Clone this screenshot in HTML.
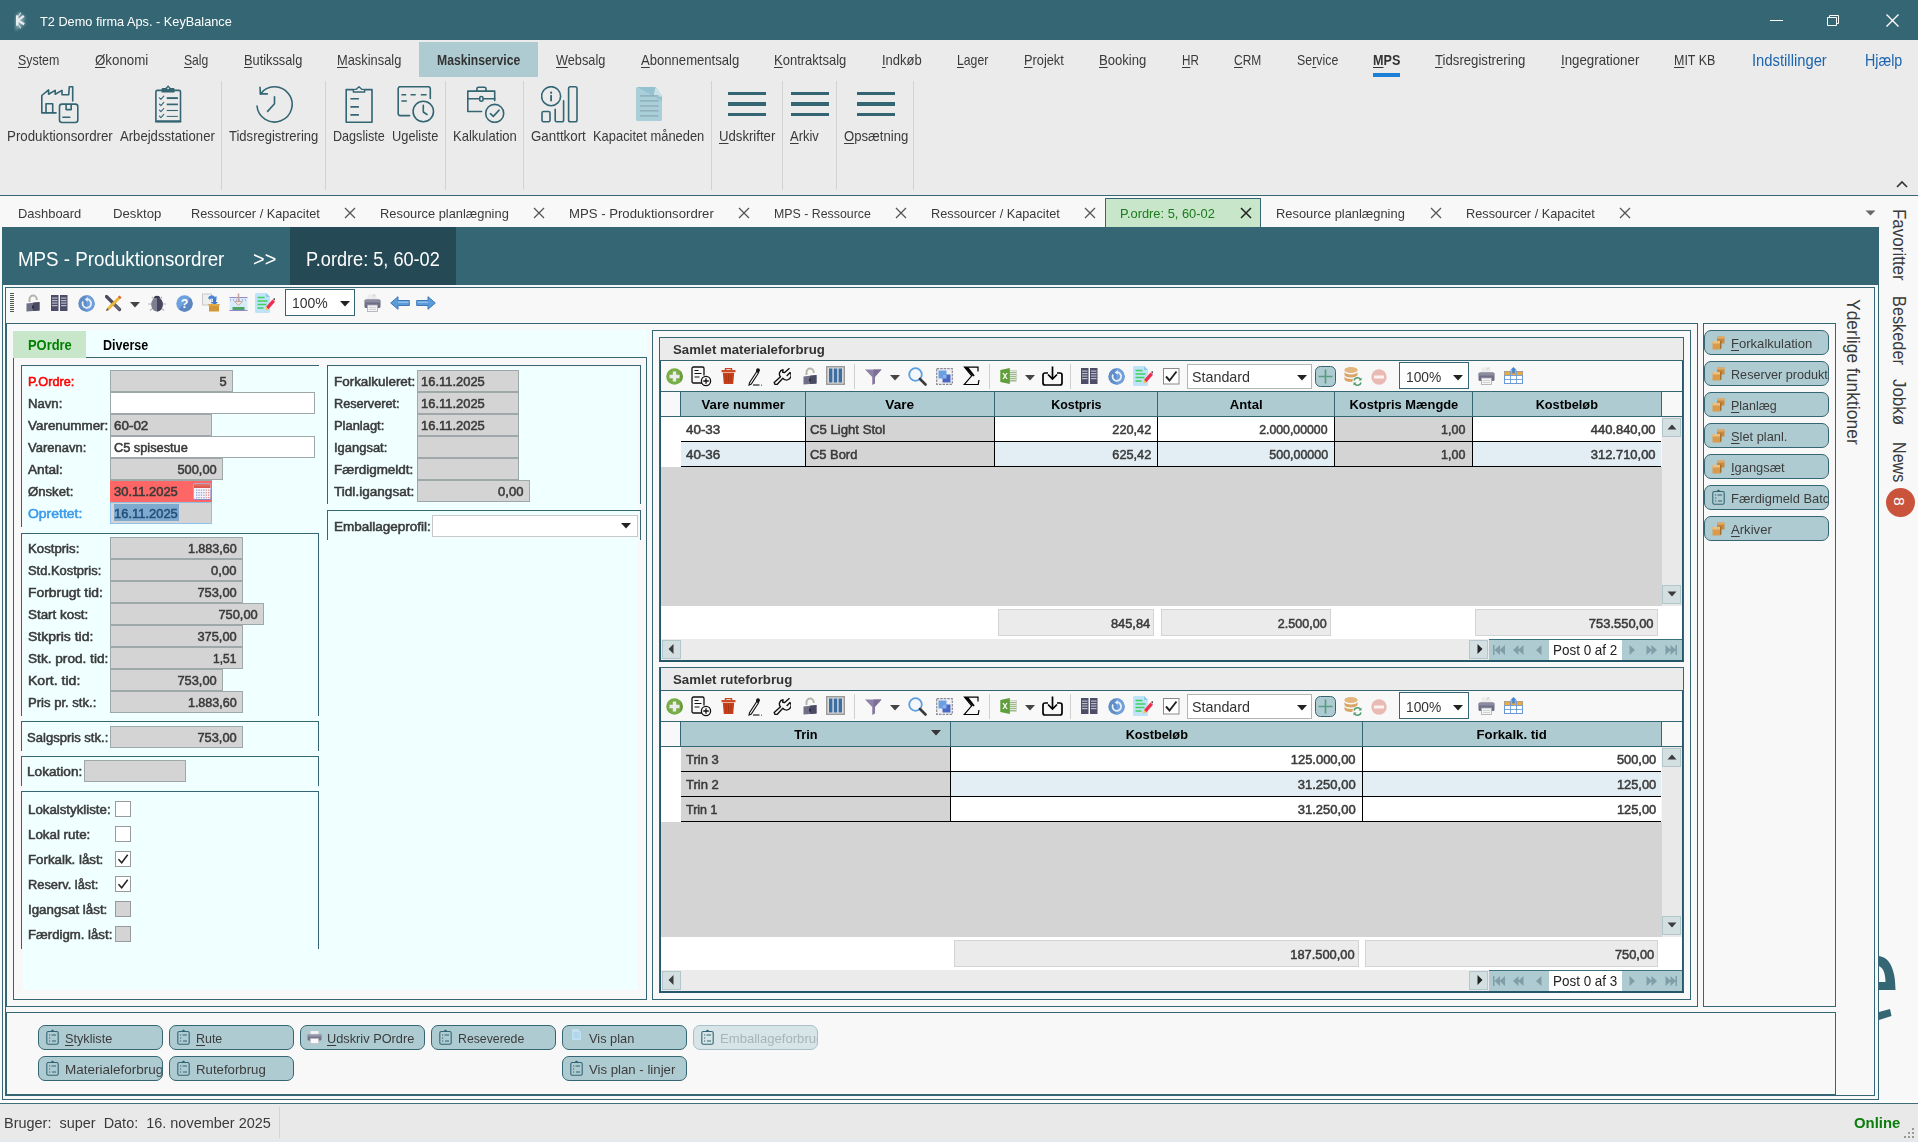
<!DOCTYPE html><html><head><meta charset="utf-8"><title>KeyBalance</title><style>html,body{margin:0;padding:0}
body{width:1918px;height:1142px;position:relative;overflow:hidden;background:#f8f8f8;font-family:"Liberation Sans",sans-serif;}
body>div,body>svg,body>span{position:absolute;box-sizing:content-box}
.t{position:absolute;white-space:pre;line-height:1;transform-origin:0 0}
u{text-decoration-thickness:1px;text-underline-offset:2px}
</style></head><body>
<div style="left:0px;top:0px;width:1918px;height:40px;background:#346674;"></div>
<svg style="left:8px;top:7px" width="24" height="26" viewBox="0 0 24 26"><defs><filter id="gl" x="-50%" y="-50%" width="200%" height="200%"><feGaussianBlur stdDeviation="1.6"/></filter></defs><path d="M9.500 8.500V18.500L16 9M10 13.500L16.500 17.500M12.500 6l-2 3M12.500 21l-2-3" stroke="#cfe0e4" stroke-width="3.500" fill="none" opacity="0.550" filter="url(#gl)"/><path d="M9.300 8.300V18.700" stroke="#e6eef0" stroke-width="2.600" fill="none"/><path d="M10 13.500L15.800 8.800M10 13.500L16.200 17.300" stroke="#e6eef0" stroke-width="2.200" fill="none"/><path d="M12.700 5.800L11 8.500M12.700 21.200L11 18.500" stroke="#d5e2e5" stroke-width="1.200" fill="none"/></svg>
<span class="t" style="font-size:13.3px;color:#fff;left:40.3px;top:14.9px;transform:scaleX(0.9577);">T2 Demo firma Aps. - KeyBalance</span>
<div style="left:1770px;top:20px;width:13px;height:1px;background:#fff;"></div>
<svg style="left:1826px;top:14px" width="14" height="13" viewBox="0 0 14 13"><path d="M1.5 3.5h9v8h-9z M3.5 3.5v-2h9v8h-2" stroke="#fff" fill="none" stroke-width="1"/></svg>
<svg style="left:1885px;top:13px" width="15" height="15" viewBox="0 0 15 15"><path d="M1.5 1.5l12 12M13.5 1.5l-12 12" stroke="#fff" fill="none" stroke-width="1.4"/></svg>
<div style="left:0px;top:40px;width:1918px;height:155px;background:#ebebeb;"></div>
<div style="left:419px;top:42px;width:119px;height:35px;background:#aecbd1;"></div>
<span class="t" style="font-size:14.5px;color:#3a3a3a;left:18.3px;top:52.8px;transform:scaleX(0.8543);"><u>S</u>ystem</span>
<span class="t" style="font-size:14.5px;color:#3a3a3a;left:95.3px;top:52.8px;transform:scaleX(0.9185);"><u>Ø</u>konomi</span>
<span class="t" style="font-size:14.5px;color:#3a3a3a;left:184.3px;top:52.8px;transform:scaleX(0.837);"><u>S</u>alg</span>
<span class="t" style="font-size:14.5px;color:#3a3a3a;left:244.3px;top:52.8px;transform:scaleX(0.8821);"><u>B</u>utikssalg</span>
<span class="t" style="font-size:14.5px;color:#3a3a3a;left:337.3px;top:52.8px;transform:scaleX(0.8863);"><u>M</u>askinsalg</span>
<span class="t" style="font-size:14.5px;color:#3a3a3a;left:556.3px;top:52.8px;transform:scaleX(0.8777);"><u>W</u>ebsalg</span>
<span class="t" style="font-size:14.5px;color:#3a3a3a;left:641.3px;top:52.8px;transform:scaleX(0.9031);"><u>A</u>bonnementsalg</span>
<span class="t" style="font-size:14.5px;color:#3a3a3a;left:774.3px;top:52.8px;transform:scaleX(0.8969);"><u>K</u>ontraktsalg</span>
<span class="t" style="font-size:14.5px;color:#3a3a3a;left:882.3px;top:52.8px;transform:scaleX(0.8975);"><u>I</u>ndkøb</span>
<span class="t" style="font-size:14.5px;color:#3a3a3a;left:957.3px;top:52.8px;transform:scaleX(0.8435);"><u>L</u>ager</span>
<span class="t" style="font-size:14.5px;color:#3a3a3a;left:1023.8px;top:52.8px;transform:scaleX(0.8817);"><u>P</u>rojekt</span>
<span class="t" style="font-size:14.5px;color:#3a3a3a;left:1099.3px;top:52.8px;transform:scaleX(0.9026);"><u>B</u>ooking</span>
<span class="t" style="font-size:14.5px;color:#3a3a3a;left:1181.8px;top:52.8px;transform:scaleX(0.8012);"><u>H</u>R</span>
<span class="t" style="font-size:14.5px;color:#3a3a3a;left:1233.8px;top:52.8px;transform:scaleX(0.8261);"><u>C</u>RM</span>
<span class="t" style="font-size:14.5px;color:#3a3a3a;left:1297.3px;top:52.8px;transform:scaleX(0.8535);">Se<u>r</u>vice</span>
<span class="t" style="font-size:14.5px;color:#3a3a3a;left:1435.3px;top:52.8px;transform:scaleX(0.9084);"><u>T</u>idsregistrering</span>
<span class="t" style="font-size:14.5px;color:#3a3a3a;left:1560.8px;top:52.8px;transform:scaleX(0.9163);"><u>I</u>ngegrationer</span>
<span class="t" style="font-size:14.5px;color:#3a3a3a;left:1673.8px;top:52.8px;transform:scaleX(0.8587);"><u>M</u>IT KB</span>
<span class="t" style="font-size:14.5px;color:#333;font-weight:700;left:437.3px;top:52.8px;transform:scaleX(0.8401);">Maskinservice</span>
<span class="t" style="font-size:14.5px;color:#333;font-weight:700;left:1373.3px;top:52.8px;transform:scaleX(0.8684);"><u>M</u>PS</span>
<div style="left:1373px;top:73px;width:27px;height:4px;background:#1e7fd6;"></div>
<span class="t" style="font-size:16px;color:#1c64ad;left:1752.3px;top:52.55px;transform:scaleX(0.9242);">Indstillinger</span>
<span class="t" style="font-size:16px;color:#1c64ad;left:1864.8px;top:52.55px;transform:scaleX(0.8924);">Hjælp</span>
<div style="left:221px;top:81px;width:1px;height:109px;background:#d2d2d2;"></div>
<div style="left:325px;top:81px;width:1px;height:109px;background:#d2d2d2;"></div>
<div style="left:445px;top:81px;width:1px;height:109px;background:#d2d2d2;"></div>
<div style="left:523px;top:81px;width:1px;height:109px;background:#d2d2d2;"></div>
<div style="left:711px;top:81px;width:1px;height:109px;background:#d2d2d2;"></div>
<div style="left:782px;top:81px;width:1px;height:109px;background:#d2d2d2;"></div>
<div style="left:836px;top:81px;width:1px;height:109px;background:#d2d2d2;"></div>
<div style="left:913px;top:81px;width:1px;height:109px;background:#d2d2d2;"></div>
<span class="t" style="font-size:14.5px;color:#3a3a3a;left:7.3px;top:128.8px;transform:scaleX(0.918);">Produktionsordrer</span>
<span class="t" style="font-size:14.5px;color:#3a3a3a;left:120.3px;top:128.8px;transform:scaleX(0.9047);">Arbejdsstationer</span>
<span class="t" style="font-size:14.5px;color:#3a3a3a;left:229.3px;top:128.8px;transform:scaleX(0.8985);">Tidsregistrering</span>
<span class="t" style="font-size:14.5px;color:#3a3a3a;left:333.3px;top:128.8px;transform:scaleX(0.8685);">Dagsliste</span>
<span class="t" style="font-size:14.5px;color:#3a3a3a;left:392.3px;top:128.8px;transform:scaleX(0.8837);">Ugeliste</span>
<span class="t" style="font-size:14.5px;color:#3a3a3a;left:453.3px;top:128.8px;transform:scaleX(0.8994);">Kalkulation</span>
<span class="t" style="font-size:14.5px;color:#3a3a3a;left:531.3px;top:128.8px;transform:scaleX(0.9188);">Ganttkort</span>
<span class="t" style="font-size:14.5px;color:#3a3a3a;left:593.3px;top:128.8px;transform:scaleX(0.8907);">Kapacitet måneden</span>
<span class="t" style="font-size:14.5px;color:#3a3a3a;left:719.3px;top:128.8px;transform:scaleX(0.9072);"><u>U</u>dskrifter</span>
<span class="t" style="font-size:14.5px;color:#3a3a3a;left:789.8px;top:128.8px;transform:scaleX(0.8935);"><u>A</u>rkiv</span>
<span class="t" style="font-size:14.5px;color:#3a3a3a;left:843.8px;top:128.8px;transform:scaleX(0.9064);"><u>O</u>psætning</span>
<svg style="left:1895px;top:179px" width="14" height="10" viewBox="0 0 14 10"><path d="M2 8l5-5 5 5" stroke="#333" stroke-width="1.6" fill="none"/></svg>
<div style="left:0px;top:195px;width:1918px;height:1px;background:#346674;"></div>
<div style="left:0px;top:196px;width:1918px;height:907px;background:#f8f8f8;"></div>
<div style="left:1105px;top:198px;width:156px;height:30px;background:#c8e6c9;border:1px solid #346674;box-sizing:border-box;"></div>
<span class="t" style="font-size:13.3px;color:#3a3a3a;left:17.8px;top:206.9px;transform:scaleX(0.9729);">Dashboard</span>
<span class="t" style="font-size:13.3px;color:#3a3a3a;left:112.8px;top:206.9px;transform:scaleX(0.9901);">Desktop</span>
<span class="t" style="font-size:13.3px;color:#3a3a3a;left:191.3px;top:206.9px;transform:scaleX(0.9575);">Ressourcer / Kapacitet</span>
<svg style="left:344px;top:207px" width="12" height="12" viewBox="0 0 12 12"><path d="M1 1l10 10M11 1l-10 10" stroke="#555" stroke-width="1.3" fill="none"/></svg>
<span class="t" style="font-size:13.3px;color:#3a3a3a;left:379.8px;top:206.9px;transform:scaleX(0.968);">Resource planlægning</span>
<svg style="left:532.5px;top:207px" width="12" height="12" viewBox="0 0 12 12"><path d="M1 1l10 10M11 1l-10 10" stroke="#555" stroke-width="1.3" fill="none"/></svg>
<span class="t" style="font-size:13.3px;color:#3a3a3a;left:568.8px;top:206.9px;transform:scaleX(0.9896);">MPS - Produktionsordrer</span>
<svg style="left:738px;top:207px" width="12" height="12" viewBox="0 0 12 12"><path d="M1 1l10 10M11 1l-10 10" stroke="#555" stroke-width="1.3" fill="none"/></svg>
<span class="t" style="font-size:13.3px;color:#3a3a3a;left:773.8px;top:206.9px;transform:scaleX(0.9291);">MPS - Ressource</span>
<svg style="left:895px;top:207px" width="12" height="12" viewBox="0 0 12 12"><path d="M1 1l10 10M11 1l-10 10" stroke="#555" stroke-width="1.3" fill="none"/></svg>
<span class="t" style="font-size:13.3px;color:#3a3a3a;left:931.3px;top:206.9px;transform:scaleX(0.9575);">Ressourcer / Kapacitet</span>
<svg style="left:1084px;top:207px" width="12" height="12" viewBox="0 0 12 12"><path d="M1 1l10 10M11 1l-10 10" stroke="#555" stroke-width="1.3" fill="none"/></svg>
<span class="t" style="font-size:13.3px;color:#3a3a3a;left:1276.3px;top:206.9px;transform:scaleX(0.968);">Resource planlægning</span>
<svg style="left:1429.5px;top:207px" width="12" height="12" viewBox="0 0 12 12"><path d="M1 1l10 10M11 1l-10 10" stroke="#555" stroke-width="1.3" fill="none"/></svg>
<span class="t" style="font-size:13.3px;color:#3a3a3a;left:1465.8px;top:206.9px;transform:scaleX(0.9575);">Ressourcer / Kapacitet</span>
<svg style="left:1619px;top:207px" width="12" height="12" viewBox="0 0 12 12"><path d="M1 1l10 10M11 1l-10 10" stroke="#555" stroke-width="1.3" fill="none"/></svg>
<span class="t" style="font-size:13.3px;color:#1b7a1b;left:1119.8px;top:206.9px;transform:scaleX(0.9666);">P.ordre: 5, 60-02</span>
<svg style="left:1240px;top:207px" width="12" height="12" viewBox="0 0 12 12"><path d="M1 1l10 10M11 1l-10 10" stroke="#222" stroke-width="1.5" fill="none"/></svg>
<svg style="left:1865px;top:210px" width="11" height="7" viewBox="0 0 11 7"><path d="M0.5 0.5h10l-5 5z" fill="#666"/></svg>
<div style="left:2px;top:227px;width:1877px;height:58px;background:#346674;"></div>
<div style="left:290px;top:227px;width:166px;height:58px;background:#254a55;"></div>
<span class="t" style="font-size:20px;color:#fff;left:18.3px;top:249.05px;transform:scaleX(0.9374);">MPS - Produktionsordrer</span>
<span class="t" style="font-size:20px;color:#fff;left:253.3px;top:249.05px;transform:scaleX(0.9975);">&gt;&gt;</span>
<span class="t" style="font-size:20px;color:#fff;left:306.3px;top:249.05px;transform:scaleX(0.907);">P.ordre: 5, 60-02</span>
<div style="left:1879px;top:196px;width:39px;height:907px;background:#f8f8f8;"></div>
<span class="t" style="font-size:17.5px;color:#3a3a3a;left:1907.31px;top:208.8px;transform:rotate(90deg) scaleX(0.9701);">Favoritter</span>
<span class="t" style="font-size:17.5px;color:#3a3a3a;left:1907.31px;top:296.4px;transform:rotate(90deg) scaleX(0.9319);">Beskeder</span>
<span class="t" style="font-size:17.5px;color:#3a3a3a;left:1907.31px;top:379.4px;transform:rotate(90deg) scaleX(0.9652);">Jobkø</span>
<span class="t" style="font-size:17.5px;color:#3a3a3a;left:1907.31px;top:442.4px;transform:rotate(90deg) scaleX(0.9208);">News</span>
<div style="left:1886px;top:488px;width:29px;height:29px;background:#c9533b;border-radius:50%;"></div>
<span class="t" style="font-size:15px;color:#fff;left:1907.2px;top:496.9px;transform:rotate(90deg) scaleX(1.0547);">8</span>
<svg style="left:1879px;top:950px" width="20" height="80" viewBox="0 0 20 80"><path d="M0 6 C10 7.500 16.500 18 16.500 40 L0 40 L0 32 L6.500 32 C6.500 24 4.500 18 0 16 Z" fill="#346674"/><path d="M0 62 L11 59 L12.500 66 L0 70 Z" fill="#346674"/></svg>
<div style="left:0px;top:1100px;width:1918px;height:3px;background:#fdfdfd;"></div>
<div style="left:0px;top:1103px;width:1918px;height:39px;background:#e9e9e9;"></div>
<div style="left:0px;top:1103px;width:1918px;height:1px;background:#3f6e7b;"></div>
<div style="left:0px;top:1140px;width:1918px;height:2px;background:#e3e9ef;"></div>
<span class="t" style="font-size:14.5px;color:#3a3a3a;left:4.3px;top:1115.8px;transform:scaleX(0.997);">Bruger:  super  Dato:  16. november 2025</span>
<div style="left:279px;top:1107px;width:1px;height:31px;background:#d4d4d4;"></div>
<span class="t" style="font-size:14.5px;color:#0a7d0a;font-weight:700;left:1854.3px;top:1115.8px;transform:scaleX(1.026);">Online</span>
<svg style="left:1903px;top:1127px" width="12" height="12" viewBox="0 0 12 12"><g fill="#999"><rect x="9" y="1" width="2" height="2"/><rect x="5" y="5" width="2" height="2"/><rect x="9" y="5" width="2" height="2"/><rect x="1" y="9" width="2" height="2"/><rect x="5" y="9" width="2" height="2"/><rect x="9" y="9" width="2" height="2"/></g></svg>
<svg style="left:41.4px;top:85.5px" width="38" height="38" viewBox="0 0 38 38"><g fill="none" stroke="#336573" stroke-width="1.600" stroke-linejoin="round" stroke-linecap="round"><path d="M15 26.900H0.800V9.500L7.600 3.900V8.300L14.200 4.400V8.300L21 4.400V8.800H27.700L28.300 0.800H31.700V14.900"/><path d="M5 26.900V17.800H11.700V26.900"/><rect x="18.500" y="18.100" width="18.300" height="18.400" rx="2.500"/><path d="M25.100 18.500V23.600H30.200V18.500M21.900 31.200H28.800"/></g></svg><svg style="left:154.6px;top:85px" width="27" height="38" viewBox="0 0 27 38"><g fill="none" stroke="#336573" stroke-width="1.600" stroke-linejoin="round" stroke-linecap="round"><rect x="0.900" y="5.400" width="24.600" height="31" rx="1.500"/><path d="M0.900 36.500h24.600" stroke-width="2.200"/><path d="M11.700 13.1H22.900" stroke-width="1.9" stroke-linecap="butt"/><path d="M4.400 12.799999999999999l1.500 1.500 2.900-3.200" stroke-width="1.100"/><path d="M11.700 19.4H22.900" stroke-width="1.7" stroke-linecap="butt"/><path d="M4.400 19.099999999999998l1.500 1.500 2.900-3.200" stroke-width="1.100"/><path d="M11.700 25.5H22.900" stroke-width="1.1" stroke-linecap="butt"/><path d="M4.400 25.2l1.500 1.500 2.900-3.200" stroke-width="1.100"/><path d="M11.700 31.4H22.900" stroke-width="1" stroke-linecap="butt"/><path d="M4.400 31.099999999999998l1.500 1.500 2.900-3.200" stroke-width="1.100"/></g><path d="M6.600 7.400V4.200a1.200 1.200 0 0 1 1.200-1.200h2.700l2.600-2.800 2.600 2.800h2.700a1.200 1.200 0 0 1 1.200 1.200V7.400z" fill="#336573"/><circle cx="13.100" cy="3.300" r="0.900" fill="#ebebeb"/></svg><svg style="left:255.6px;top:85.6px" width="38" height="38" viewBox="0 0 38 38"><g fill="none" stroke="#336573" stroke-width="1.600" stroke-linejoin="round" stroke-linecap="round"><path d="M4.400 7.900A17.600 17.600 0 1 1 1 20"/><path d="M4 1.200L4.400 7.900L11.300 7.900"/><path d="M18.500 10.800V17.800L11.600 25.400"/></g></svg><svg style="left:345px;top:85.8px" width="28" height="37" viewBox="0 0 28 37"><g fill="none" stroke="#336573" stroke-width="1.600" stroke-linejoin="round" stroke-linecap="round"><path d="M8.500 3.600H1.200V36.200H27V3.600H19.500"/><path d="M8.300 6V4.800a1.500 1.500 0 0 1 1.500-1.500h1.500l2.700-2.600 2.700 2.600h1.500a1.500 1.500 0 0 1 1.500 1.500V6z" stroke-width="1.300"/><path d="M5.400 12.800H13.900M5.400 20.900H13.900M5.400 28.900H13.900" stroke-linecap="butt"/></g></svg><svg style="left:397.4px;top:85.8px" width="38" height="37" viewBox="0 0 38 37"><g fill="none" stroke="#336573" stroke-width="1.600" stroke-linejoin="round" stroke-linecap="round"><path d="M12.600 29.600H3.200a2 2 0 0 1-2-2V2.700a2 2 0 0 1 2-2H31.300a2 2 0 0 1 2 2V12.400"/><path d="M4.400 8.800H9.200M13.600 8.800H18.700M23.800 8.800H29.600M4.400 15H9.900" stroke-linecap="butt"/><circle cx="26.300" cy="25.500" r="10.200"/><path d="M26.300 19.300V26L30 28.500"/></g></svg><svg style="left:466.5px;top:85.8px" width="38" height="37" viewBox="0 0 38 37"><g fill="none" stroke="#336573" stroke-width="1.600" stroke-linejoin="round" stroke-linecap="round"><path d="M14.600 25.500H0.800V5.100H27.700V14.600"/><path d="M9.900 5.100V2.700a1.500 1.500 0 0 1 1.500-1.500H17.500a1.500 1.500 0 0 1 1.500 1.500V5.100"/><path d="M0.800 12.800H27.700"/><rect x="12.700" y="10.500" width="3.300" height="4.800" rx="1.500" fill="#ebebeb"/><circle cx="27.700" cy="27.400" r="9"/><path d="M23.400 27.700L26.300 30.400L32.100 24.100"/></g></svg><svg style="left:540.7px;top:85.8px" width="37" height="37" viewBox="0 0 37 37"><g fill="none" stroke="#336573" stroke-width="1.600" stroke-linejoin="round" stroke-linecap="round"><circle cx="10.100" cy="10.200" r="9.500"/><path d="M10.100 9.700V14.600" stroke-width="1.800"/><rect x="1" y="25.500" width="8" height="10.300" rx="1.500"/><path d="M14.200 23.400V34.300a1.500 1.500 0 0 0 1.500 1.500H21.100a1.500 1.500 0 0 0 1.500-1.500V14.800"/><rect x="27.600" y="0.800" width="8.400" height="35" rx="1.800"/></g><circle cx="10.100" cy="6.700" r="1.100" fill="#336573"/></svg><svg style="left:635.8px;top:86.9px" width="27" height="35" viewBox="0 0 27 35"><path d="M1.500 0H19.500L26 9.500V32.500a1.500 1.500 0 0 1-1.500 1.500H1.500A1.500 1.500 0 0 1 0 32.500V1.500A1.500 1.500 0 0 1 1.500 0z" fill="#a9cfdb"/><path d="M1.500 0H19.500L26 9.500V14L2 0.500z" fill="#94c2d1"/><path d="M19.500 0L26 9.500H20a2 2 0 0 1-2-2.500z" fill="#c9e2e9"/><path d="M3.900 8.9H22.500" stroke="#8ba9b3" stroke-width="1.300"/><path d="M3.900 13.9H22.500" stroke="#8ba9b3" stroke-width="1.300"/><path d="M3.900 19H22.500" stroke="#8ba9b3" stroke-width="1.300"/><path d="M3.900 23.8H22.500" stroke="#8ba9b3" stroke-width="1.300"/><path d="M3.900 28.9H22.500" stroke="#8ba9b3" stroke-width="1.300"/></svg><div style="left:728px;top:92px;width:38px;height:3px;background:#336573"></div><div style="left:728px;top:102px;width:38px;height:4px;background:#336573"></div><div style="left:728px;top:112.500px;width:38px;height:3.400px;background:#336573"></div><div style="left:791px;top:92px;width:38px;height:3px;background:#336573"></div><div style="left:791px;top:102px;width:38px;height:4px;background:#336573"></div><div style="left:791px;top:112.500px;width:38px;height:3.400px;background:#336573"></div><div style="left:857px;top:92px;width:38px;height:3px;background:#336573"></div><div style="left:857px;top:102px;width:38px;height:4px;background:#336573"></div><div style="left:857px;top:112.500px;width:38px;height:3.400px;background:#336573"></div>
<div style="left:2px;top:285px;width:1px;height:815px;background:#346674;"></div>
<div style="left:1878px;top:285px;width:1px;height:815px;background:#346674;"></div>
<div style="left:2px;top:1099px;width:1877px;height:1px;background:#346674;"></div>
<div style="left:5px;top:287px;width:1px;height:809px;background:#346674;"></div>
<div style="left:5px;top:287px;width:1870px;height:1px;background:#346674;"></div>
<div style="left:1874px;top:287px;width:1px;height:809px;background:#346674;"></div>
<div style="left:5px;top:1095px;width:1870px;height:1px;background:#346674;"></div>
<div style="left:5px;top:323px;width:1693px;height:1px;background:#346674;"></div>
<div style="left:6px;top:323px;width:1px;height:684px;background:#346674;"></div>
<div style="left:1697px;top:323px;width:1px;height:684px;background:#346674;"></div>
<div style="left:5px;top:1006px;width:1693px;height:1px;background:#346674;"></div>
<div style="left:1703px;top:323px;width:131px;height:682px;border:1px solid #346674;"></div>
<div style="left:6px;top:1012px;width:1px;height:83px;background:#346674;"></div>
<div style="left:5px;top:1012px;width:1831px;height:1px;background:#346674;"></div>
<div style="left:1835px;top:1012px;width:1px;height:83px;background:#346674;"></div>
<div style="left:5px;top:1094px;width:1831px;height:1px;background:#346674;"></div>
<div style="left:10px;top:293px;width:4px;height:1px;background:#555;"></div>
<div style="left:10px;top:295px;width:4px;height:1px;background:#555;"></div>
<div style="left:10px;top:297px;width:4px;height:1px;background:#555;"></div>
<div style="left:10px;top:299px;width:4px;height:1px;background:#555;"></div>
<div style="left:10px;top:301px;width:4px;height:1px;background:#555;"></div>
<div style="left:10px;top:303px;width:4px;height:1px;background:#555;"></div>
<div style="left:10px;top:305px;width:4px;height:1px;background:#555;"></div>
<div style="left:10px;top:307px;width:4px;height:1px;background:#555;"></div>
<div style="left:10px;top:309px;width:4px;height:1px;background:#555;"></div>
<div style="left:10px;top:311px;width:4px;height:1px;background:#555;"></div>
<div style="left:285px;top:289px;width:70px;height:27px;background:#fff;border:1px solid #346674;box-sizing:border-box;"></div>
<span class="t" style="font-size:14.5px;color:#333;left:292.0px;top:295.8px;transform:scaleX(0.9651);">100%</span>
<svg style="left:339.500px;top:301px" width="10" height="6" viewBox="0 0 10 6"><path d="M0 0h10l-5 5.5z" fill="#222"/></svg>
<div style="left:13px;top:330px;width:634px;height:28px;background:#f0ffff;"></div>
<div style="left:13px;top:331px;width:73px;height:27px;background:#c8e6c9;"></div>
<div style="left:86px;top:357px;width:561px;height:1px;background:#346674;"></div>
<div style="left:13px;top:358px;width:1px;height:642px;background:#346674;"></div>
<div style="left:646px;top:358px;width:1px;height:642px;background:#346674;"></div>
<div style="left:13px;top:999px;width:634px;height:1px;background:#346674;"></div>
<div style="left:23px;top:367px;width:614px;height:623px;background:#f0ffff;"></div>
<span class="t" style="font-size:14px;color:#008000;font-weight:700;left:28.3px;top:338.05px;transform:scaleX(0.9227);">POrdre</span>
<span class="t" style="font-size:14px;color:#000;font-weight:700;left:102.6px;top:338.05px;transform:scaleX(0.8954);">Diverse</span>
<div style="left:21px;top:365px;width:298px;height:1px;background:#346674;"></div>
<div style="left:21px;top:365px;width:1px;height:162px;background:#346674;"></div>
<span class="t" style="font-size:12px;color:#ff0000;-webkit-text-stroke:0.5px;left:28.3px;top:376.05px;transform:scaleX(1.0568);">P.Ordre:</span>
<div style="left:110px;top:370px;width:121px;height:20px;background:#d4d4d4;border:1px solid #9fa8a8;"></div>
<span class="t" style="font-size:12px;color:#3a3a3a;-webkit-text-stroke:0.5px;right:1691.4px;top:376.05px;transform-origin:100% 0;transform:scaleX(1.0716);">5</span>
<span class="t" style="font-size:12px;color:#3a3a3a;-webkit-text-stroke:0.5px;left:28.3px;top:398.05px;transform:scaleX(1.0938);">Navn:</span>
<div style="left:110px;top:392px;width:203px;height:20px;background:#fff;border:1px solid #9fa8a8;"></div>
<span class="t" style="font-size:12px;color:#3a3a3a;-webkit-text-stroke:0.5px;left:28.3px;top:420.05px;transform:scaleX(1.1182);">Varenummer:</span>
<div style="left:110px;top:414px;width:100px;height:20px;background:#d4d4d4;border:1px solid #9fa8a8;"></div>
<span class="t" style="font-size:12px;color:#3a3a3a;-webkit-text-stroke:0.5px;left:114.3px;top:420.05px;transform:scaleX(1.1172);">60-02</span>
<span class="t" style="font-size:12px;color:#3a3a3a;-webkit-text-stroke:0.5px;left:28.3px;top:442.05px;transform:scaleX(1.0834);">Varenavn:</span>
<div style="left:110px;top:436px;width:203px;height:20px;background:#fff;border:1px solid #9fa8a8;"></div>
<span class="t" style="font-size:12px;color:#3a3a3a;-webkit-text-stroke:0.5px;left:114.3px;top:442.05px;transform:scaleX(1.0638);">C5 spisestue</span>
<span class="t" style="font-size:12px;color:#3a3a3a;-webkit-text-stroke:0.5px;left:28.3px;top:464.05px;transform:scaleX(1.134);">Antal:</span>
<div style="left:110px;top:458px;width:111px;height:20px;background:#d4d4d4;border:1px solid #9fa8a8;"></div>
<span class="t" style="font-size:12px;color:#3a3a3a;-webkit-text-stroke:0.5px;right:1701.4px;top:464.05px;transform-origin:100% 0;transform:scaleX(1.0708);">500,00</span>
<span class="t" style="font-size:12px;color:#3a3a3a;-webkit-text-stroke:0.5px;left:28.3px;top:486.05px;transform:scaleX(1.0953);">Ønsket:</span>
<div style="left:110px;top:480px;width:100px;height:20px;background:#ff6666;border:1px solid #ff6666;border-top-color:#9fa8a8;"></div>
<span class="t" style="font-size:12px;color:#3a3a3a;-webkit-text-stroke:0.5px;left:114.3px;top:486.05px;transform:scaleX(1.0782);">30.11.2025</span>
<span class="t" style="font-size:12px;color:#3b9bea;-webkit-text-stroke:0.5px;left:28.3px;top:508.05px;transform:scaleX(1.1631);">Oprettet:</span>
<div style="left:110px;top:502px;width:100px;height:20px;background:#d4d4d4;border:1px solid #8fc0ea;"></div>
<div style="left:114px;top:504px;width:65px;height:17px;background:#7faacf;"></div>
<span class="t" style="font-size:12px;color:#24507c;-webkit-text-stroke:0.5px;left:114.3px;top:508.05px;transform:scaleX(1.0782);">16.11.2025</span>
<svg style="left:192.500px;top:482.5px" width="18.500" height="17" viewBox="0 0 18.500 17"><rect x="0.500" y="0.500" width="17.500" height="16" rx="1.800" fill="#f6f6fc" stroke="#b8a4c8"/><path d="M1 2.300a1.300 1.300 0 0 1 1.300-1.300h13.900a1.300 1.300 0 0 1 1.300 1.300v2.700h-16.500z" fill="#dc5a4e"/><path d="M1.500 2h15.500" stroke="#ee8f86" stroke-width="0.800"/><g fill="#93a3d8"><rect x="3" y="6.500" width="1.300" height="1.300"/><rect x="5.400" y="6.500" width="1.300" height="1.300"/><rect x="7.800" y="6.500" width="1.300" height="1.300"/><rect x="10.200" y="6.500" width="1.300" height="1.300"/><rect x="3" y="9" width="1.300" height="1.300"/><rect x="5.400" y="9" width="1.300" height="1.300"/><rect x="7.800" y="9" width="1.300" height="1.300"/><rect x="10.200" y="9" width="1.300" height="1.300"/><rect x="3" y="11.500" width="1.300" height="1.300"/><rect x="5.400" y="11.500" width="1.300" height="1.300"/><rect x="7.800" y="11.500" width="1.300" height="1.300"/><rect x="10.200" y="11.500" width="1.300" height="1.300"/><rect x="3" y="14" width="1.300" height="1.300"/><rect x="5.400" y="14" width="1.300" height="1.300"/><rect x="7.800" y="14" width="1.300" height="1.300"/><rect x="10.200" y="14" width="1.300" height="1.300"/></g><g fill="#e98a80"><rect x="12.600" y="6.500" width="1.300" height="1.300"/><rect x="15" y="6.500" width="1.300" height="1.300"/><rect x="12.600" y="9" width="1.300" height="1.300"/><rect x="15" y="9" width="1.300" height="1.300"/><rect x="12.600" y="11.500" width="1.300" height="1.300"/><rect x="15" y="11.500" width="1.300" height="1.300"/><rect x="12.600" y="14" width="1.300" height="1.300"/><rect x="15" y="14" width="1.300" height="1.300"/></g><path d="M1.500 16.500h15.500a1 1 0 0 0 1-1v-9" fill="none" stroke="#8f86c0" stroke-width="1"/></svg>
<div style="left:327px;top:365px;width:314px;height:1px;background:#346674;"></div>
<div style="left:327px;top:365px;width:1px;height:139px;background:#346674;"></div>
<div style="left:640px;top:365px;width:1px;height:139px;background:#346674;"></div>
<span class="t" style="font-size:12px;color:#3a3a3a;-webkit-text-stroke:0.5px;left:334.3px;top:376.05px;transform:scaleX(1.1182);">Forkalkuleret:</span>
<div style="left:417px;top:370px;width:100px;height:20px;background:#d4d4d4;border:1px solid #9fa8a8;"></div>
<span class="t" style="font-size:12px;color:#3a3a3a;-webkit-text-stroke:0.5px;left:421.3px;top:376.05px;transform:scaleX(1.0782);">16.11.2025</span>
<span class="t" style="font-size:12px;color:#3a3a3a;-webkit-text-stroke:0.5px;left:334.3px;top:398.05px;transform:scaleX(1.0575);">Reserveret:</span>
<div style="left:417px;top:392px;width:100px;height:20px;background:#d4d4d4;border:1px solid #9fa8a8;"></div>
<span class="t" style="font-size:12px;color:#3a3a3a;-webkit-text-stroke:0.5px;left:421.3px;top:398.05px;transform:scaleX(1.0782);">16.11.2025</span>
<span class="t" style="font-size:12px;color:#3a3a3a;-webkit-text-stroke:0.5px;left:334.3px;top:420.05px;transform:scaleX(1.077);">Planlagt:</span>
<div style="left:417px;top:414px;width:100px;height:20px;background:#d4d4d4;border:1px solid #9fa8a8;"></div>
<span class="t" style="font-size:12px;color:#3a3a3a;-webkit-text-stroke:0.5px;left:421.3px;top:420.05px;transform:scaleX(1.0782);">16.11.2025</span>
<span class="t" style="font-size:12px;color:#3a3a3a;-webkit-text-stroke:0.5px;left:334.3px;top:442.05px;transform:scaleX(1.0795);">Igangsat:</span>
<div style="left:417px;top:436px;width:100px;height:20px;background:#d4d4d4;border:1px solid #9fa8a8;"></div>
<span class="t" style="font-size:12px;color:#3a3a3a;-webkit-text-stroke:0.5px;left:334.3px;top:464.05px;transform:scaleX(1.1218);">Færdigmeldt:</span>
<div style="left:417px;top:458px;width:100px;height:20px;background:#d4d4d4;border:1px solid #9fa8a8;"></div>
<span class="t" style="font-size:12px;color:#3a3a3a;-webkit-text-stroke:0.5px;left:334.3px;top:486.05px;transform:scaleX(1.132);">Tidl.igangsat:</span>
<div style="left:417px;top:480px;width:111px;height:20px;background:#d4d4d4;border:1px solid #9fa8a8;"></div>
<span class="t" style="font-size:12px;color:#3a3a3a;-webkit-text-stroke:0.5px;right:1394.4px;top:486.05px;transform-origin:100% 0;transform:scaleX(1.0831);">0,00</span>
<div style="left:327px;top:510px;width:314px;height:1px;background:#346674;"></div>
<div style="left:327px;top:510px;width:1px;height:30px;background:#346674;"></div>
<div style="left:640px;top:510px;width:1px;height:30px;background:#346674;"></div>
<span class="t" style="font-size:12px;color:#3a3a3a;-webkit-text-stroke:0.5px;left:334.3px;top:521.05px;transform:scaleX(1.125);">Emballageprofil:</span>
<div style="left:432px;top:515px;width:204px;height:20px;background:#fff;border:1px solid #c8c8c8;"></div>
<svg style="left:621px;top:523px" width="10" height="6" viewBox="0 0 10 6"><path d="M0 0h10l-5 5.5z" fill="#222"/></svg>
<div style="left:21px;top:533px;width:298px;height:1px;background:#346674;"></div>
<div style="left:21px;top:533px;width:1px;height:183px;background:#346674;"></div>
<div style="left:318px;top:533px;width:1px;height:183px;background:#346674;"></div>
<span class="t" style="font-size:12px;color:#3a3a3a;-webkit-text-stroke:0.5px;left:28.3px;top:543.05px;transform:scaleX(1.0988);">Kostpris:</span>
<div style="left:110px;top:537px;width:131px;height:20px;background:#d4d4d4;border:1px solid #9fa8a8;"></div>
<span class="t" style="font-size:12px;color:#3a3a3a;-webkit-text-stroke:0.5px;right:1681.4px;top:543.05px;transform-origin:100% 0;transform:scaleX(1.0445);">1.883,60</span>
<span class="t" style="font-size:12px;color:#3a3a3a;-webkit-text-stroke:0.5px;left:28.3px;top:565.05px;transform:scaleX(1.0774);">Std.Kostpris:</span>
<div style="left:110px;top:559px;width:131px;height:20px;background:#d4d4d4;border:1px solid #9fa8a8;"></div>
<span class="t" style="font-size:12px;color:#3a3a3a;-webkit-text-stroke:0.5px;right:1681.4px;top:565.05px;transform-origin:100% 0;transform:scaleX(1.0831);">0,00</span>
<span class="t" style="font-size:12px;color:#3a3a3a;-webkit-text-stroke:0.5px;left:28.3px;top:587.05px;transform:scaleX(1.156);">Forbrugt tid:</span>
<div style="left:110px;top:581px;width:131px;height:20px;background:#d4d4d4;border:1px solid #9fa8a8;"></div>
<span class="t" style="font-size:12px;color:#3a3a3a;-webkit-text-stroke:0.5px;right:1681.4px;top:587.05px;transform-origin:100% 0;transform:scaleX(1.0708);">753,00</span>
<span class="t" style="font-size:12px;color:#3a3a3a;-webkit-text-stroke:0.5px;left:28.3px;top:609.05px;transform:scaleX(1.116);">Start kost:</span>
<div style="left:110px;top:603px;width:152px;height:20px;background:#d4d4d4;border:1px solid #9fa8a8;"></div>
<span class="t" style="font-size:12px;color:#3a3a3a;-webkit-text-stroke:0.5px;right:1660.4px;top:609.05px;transform-origin:100% 0;transform:scaleX(1.0708);">750,00</span>
<span class="t" style="font-size:12px;color:#3a3a3a;-webkit-text-stroke:0.5px;left:28.3px;top:631.05px;transform:scaleX(1.1657);">Stkpris tid:</span>
<div style="left:110px;top:625px;width:131px;height:20px;background:#d4d4d4;border:1px solid #9fa8a8;"></div>
<span class="t" style="font-size:12px;color:#3a3a3a;-webkit-text-stroke:0.5px;right:1681.4px;top:631.05px;transform-origin:100% 0;transform:scaleX(1.0708);">375,00</span>
<span class="t" style="font-size:12px;color:#3a3a3a;-webkit-text-stroke:0.5px;left:28.3px;top:653.05px;transform:scaleX(1.1357);">Stk. prod. tid:</span>
<div style="left:110px;top:647px;width:131px;height:20px;background:#d4d4d4;border:1px solid #9fa8a8;"></div>
<span class="t" style="font-size:12px;color:#3a3a3a;-webkit-text-stroke:0.5px;right:1681.4px;top:653.05px;transform-origin:100% 0;transform:scaleX(0.9975);">1,51</span>
<span class="t" style="font-size:12px;color:#3a3a3a;-webkit-text-stroke:0.5px;left:28.3px;top:675.05px;transform:scaleX(1.1703);">Kort. tid:</span>
<div style="left:110px;top:669px;width:111px;height:20px;background:#d4d4d4;border:1px solid #9fa8a8;"></div>
<span class="t" style="font-size:12px;color:#3a3a3a;-webkit-text-stroke:0.5px;right:1701.4px;top:675.05px;transform-origin:100% 0;transform:scaleX(1.0708);">753,00</span>
<span class="t" style="font-size:12px;color:#3a3a3a;-webkit-text-stroke:0.5px;left:28.3px;top:697.05px;transform:scaleX(1.0895);">Pris pr. stk.:</span>
<div style="left:110px;top:691px;width:131px;height:20px;background:#d4d4d4;border:1px solid #9fa8a8;"></div>
<span class="t" style="font-size:12px;color:#3a3a3a;-webkit-text-stroke:0.5px;right:1681.4px;top:697.05px;transform-origin:100% 0;transform:scaleX(1.0445);">1.883,60</span>
<div style="left:21px;top:721px;width:298px;height:1px;background:#346674;"></div>
<div style="left:21px;top:721px;width:1px;height:30px;background:#346674;"></div>
<div style="left:318px;top:721px;width:1px;height:30px;background:#346674;"></div>
<span class="t" style="font-size:12px;color:#3a3a3a;-webkit-text-stroke:0.5px;left:27.3px;top:732.05px;transform:scaleX(1.0883);">Salgspris stk.:</span>
<div style="left:110px;top:725.5px;width:131px;height:20px;background:#d4d4d4;border:1px solid #9fa8a8;"></div>
<span class="t" style="font-size:12px;color:#3a3a3a;-webkit-text-stroke:0.5px;right:1681.4px;top:732.05px;transform-origin:100% 0;transform:scaleX(1.0708);">753,00</span>
<div style="left:21px;top:756px;width:298px;height:1px;background:#346674;"></div>
<div style="left:21px;top:756px;width:1px;height:30px;background:#346674;"></div>
<div style="left:318px;top:756px;width:1px;height:30px;background:#346674;"></div>
<span class="t" style="font-size:12px;color:#3a3a3a;-webkit-text-stroke:0.5px;left:27.3px;top:766.05px;transform:scaleX(1.1355);">Lokation:</span>
<div style="left:84px;top:760px;width:100px;height:20px;background:#d4d4d4;border:1px solid #9fa8a8;"></div>
<div style="left:21px;top:791px;width:298px;height:1px;background:#346674;"></div>
<div style="left:21px;top:791px;width:1px;height:158px;background:#346674;"></div>
<div style="left:318px;top:791px;width:1px;height:158px;background:#346674;"></div>
<span class="t" style="font-size:12px;color:#3a3a3a;-webkit-text-stroke:0.5px;left:28.3px;top:804.05px;transform:scaleX(1.1057);">Lokalstykliste:</span>
<div style="left:115px;top:801px;width:14px;height:14px;background:#fff;border:1px solid #9a9a9a;"></div>
<span class="t" style="font-size:12px;color:#3a3a3a;-webkit-text-stroke:0.5px;left:28.3px;top:829.05px;transform:scaleX(1.1116);">Lokal rute:</span>
<div style="left:115px;top:826px;width:14px;height:14px;background:#fff;border:1px solid #9a9a9a;"></div>
<span class="t" style="font-size:12px;color:#3a3a3a;-webkit-text-stroke:0.5px;left:28.3px;top:854.05px;transform:scaleX(1.1071);">Forkalk. låst:</span>
<div style="left:115px;top:851px;width:14px;height:14px;background:#fff;border:1px solid #9a9a9a;"></div>
<svg style="left:116px;top:852px" width="14" height="14" viewBox="0 0 14 14"><path d="M2.5 7.2l3.2 3.6 6-8" stroke="#222" stroke-width="1.5" fill="none"/></svg>
<span class="t" style="font-size:12px;color:#3a3a3a;-webkit-text-stroke:0.5px;left:28.3px;top:879.05px;transform:scaleX(1.0684);">Reserv. låst:</span>
<div style="left:115px;top:876px;width:14px;height:14px;background:#fff;border:1px solid #9a9a9a;"></div>
<svg style="left:116px;top:877px" width="14" height="14" viewBox="0 0 14 14"><path d="M2.5 7.2l3.2 3.6 6-8" stroke="#222" stroke-width="1.5" fill="none"/></svg>
<span class="t" style="font-size:12px;color:#3a3a3a;-webkit-text-stroke:0.5px;left:28.3px;top:904.05px;transform:scaleX(1.1108);">Igangsat låst:</span>
<div style="left:115px;top:901px;width:14px;height:14px;background:#d4d4d4;border:1px solid #9a9a9a;"></div>
<span class="t" style="font-size:12px;color:#3a3a3a;-webkit-text-stroke:0.5px;left:28.3px;top:929.05px;transform:scaleX(1.0993);">Færdigm. låst:</span>
<div style="left:115px;top:926px;width:14px;height:14px;background:#d4d4d4;border:1px solid #9a9a9a;"></div>
<svg style="left:24.5px;top:293.5px" width="16" height="18" viewBox="0 0 16 18"><path d="M4.5 8V5.2a3.6 3.6 0 0 1 7.2 0V6" fill="none" stroke="#b4b4aa" stroke-width="2"/><path d="M1.5 9.5l13-1.5v8.5l-13 1z" fill="#6f6f86"/><path d="M8 8.8l6.500-.8v8.500l-6.500 .5z" fill="#4a4a62"/><path d="M7 11.500h2v3h-2z" fill="#2e2e40"/></svg><svg style="left:50.5px;top:295px" width="17" height="16" viewBox="0 0 17 16"><rect x="0" y="0" width="7.5" height="16" fill="#4d4d68"/><rect x="1" y="2.5" width="5.5" height="1.2" fill="#b9b9c9"/><rect x="1" y="5" width="5.5" height="1.2" fill="#b9b9c9"/><rect x="1" y="7.5" width="5.5" height="1.2" fill="#b9b9c9"/><rect x="1" y="10" width="5.5" height="1.2" fill="#b9b9c9"/><rect x="9" y="0" width="7.5" height="16" fill="#4d4d68"/><rect x="10" y="2.5" width="5.5" height="1.2" fill="#b9b9c9"/><rect x="10" y="5" width="5.5" height="1.2" fill="#b9b9c9"/><rect x="10" y="7.5" width="5.5" height="1.2" fill="#b9b9c9"/><rect x="10" y="10" width="5.5" height="1.2" fill="#b9b9c9"/></svg><svg style="left:77.5px;top:294.5px" width="17" height="17" viewBox="0 0 17 17"><circle cx="8.500" cy="8.500" r="8.200" fill="#5f8dc6"/><path d="M8.500 0.300a8.200 8.200 0 0 1 0 16.400z" fill="#6fa0dc"/><path d="M5 6.500a4.300 4.300 0 1 0 4-2.300" fill="none" stroke="#e8eef8" stroke-width="1.800"/><path d="M9.800 2v4.800l-3.200-2.200z" fill="#e8eef8"/></svg><svg style="left:104.5px;top:294.5px" width="17" height="17" viewBox="0 0 17 17"><path d="M1.500 1.500l13 13" stroke="#4e4860" stroke-width="3.200" stroke-linecap="round"/><path d="M9 9l5.500 5.500" stroke="#6a6a72" stroke-width="2"/><path d="M14.500 2.500L3 14" stroke="#e9b93a" stroke-width="3"/><path d="M15.500 1.500l-1.500 1.500" stroke="#e0603a" stroke-width="3"/><path d="M1 16l1-3 2 2z" fill="#6b4a2a"/></svg><svg style="left:130px;top:301.5px" width="10" height="6" viewBox="0 0 10 6"><path d="M0 0h10l-5 5.500z" fill="#444"/></svg><svg style="left:147px;top:294.5px" width="20" height="17" viewBox="0 0 20 17"><g stroke="#b4b4be" stroke-width="1.200" fill="none"><path d="M5 2l2.500 2.500M15 2l-2.500 2.500M1 9h4M19 9h-4M3 15.500l3-2.500M17 15.500l-3-2.500"/></g><ellipse cx="10" cy="9.500" rx="5.800" ry="7" fill="#7e7e92"/><path d="M10 2.500a5.800 7 0 0 1 0 14z" fill="#46465e"/><path d="M7 3a3 2.200 0 0 1 6 0z" fill="#3a3a50"/></svg><svg style="left:175.5px;top:294.5px" width="17" height="17" viewBox="0 0 17 17"><circle cx="8.500" cy="8.500" r="8.200" fill="#6da2de"/><path d="M14.300 2.700a8.200 8.200 0 0 1-11.600 11.600z" fill="#5b87c2"/><text x="8.500" y="13.200" font-family="Liberation Sans,sans-serif" font-weight="700" font-size="12.500" fill="#fff" text-anchor="middle">?</text></svg><svg style="left:201.5px;top:293px" width="19" height="19" viewBox="0 0 19 19"><rect x="0.500" y="1" width="9" height="11" fill="#eee" stroke="#c9c9c9"/><path d="M6 5a4 4 0 0 1 7-1l1.500-1v4.500h-4.500l1.500-1.300a2.300 2.300 0 0 0-3.800 0.500z" fill="#4a84d4"/><path d="M11 6h3v3h2l-3.500 3.500l-3.500-3.500h2z" fill="#3d7ad0"/><path d="M6 11h12l-1 2.500h-10z" fill="#e0aa4a"/><rect x="7" y="13" width="10" height="5.500" fill="#d3973a"/></svg><svg style="left:228.5px;top:292.5px" width="19" height="19" viewBox="0 0 19 19"><rect x="0.500" y="4" width="18" height="14" fill="#d6ecfb"/><path d="M0.500 4.500h18M0.500 17.500h18" stroke="#9a86c8" stroke-width="1"/><path d="M1 7h17" stroke="#9a86c8" stroke-dasharray="1 2" stroke-width="1"/><path d="M9.500 0.500v9" stroke="#c9a7a0" stroke-width="1.600"/><path d="M5.500 8.500h8l-4 4z" fill="#f4e4e0" stroke="#c09a98" stroke-width="0.800"/><rect x="3.500" y="14" width="12" height="3" fill="#4ea36a"/></svg><svg style="left:255px;top:293px" width="20" height="20" viewBox="0 0 20 20"><path d="M1.500 0h9.500l4 4v15a1 1 0 0 1-1 1h-12.500a1.500 1.500 0 0 1-1.500-1.500v-17a1.500 1.500 0 0 1 1.500-1.500z" fill="#bfe3f8"/><path d="M11 0l4 4h-4z" fill="#8fc8ee"/><g stroke="#3fd25a" stroke-width="1.600"><path d="M2.500 4.500h7M2.500 8h10M2.500 11.500h9M2.500 15h6"/></g><path d="M17.500 6.500l2.500 2.200-6.500 7.500-2.500-2.200z" fill="#ee2d4e"/><path d="M11 14l2.500 2.200-3.300 1.200z" fill="#f2c23e"/><path d="M18 6l1.300-1 1.200 1.500-1 1z" fill="#444"/></svg><svg style="left:363.5px;top:294px" width="17" height="18" viewBox="0 0 17 18"><path d="M4 0.500h8l1 5h-10z" fill="#ececec"/><path d="M9 0.500h3l-3 3z" fill="#d8d8d8"/><rect x="0.500" y="5.500" width="16" height="8.500" rx="1.500" fill="#6e6e86"/><rect x="0.500" y="5.500" width="16" height="3" rx="1.500" fill="#8c8ca0"/><rect x="3.500" y="11" width="10" height="6.500" fill="#f4f4f4" stroke="#a9a9b4" stroke-width="0.800"/><path d="M5 13.500h7M5 15.500h7" stroke="#c9c9c9" stroke-width="0.800"/></svg><svg style="left:389.5px;top:295.5px" width="20" height="14" viewBox="0 0 20 14"><path d="M0.700 7l7.300-6.300v3.800h11.300v5h-11.300v3.800z" fill="#5b9bd8" stroke="#3f78b8" stroke-width="1"/><path d="M8 5.500h10.500v1.500h-10.500z" fill="#8cc0ee"/></svg><svg style="left:415.5px;top:295.5px" width="20" height="14" viewBox="0 0 20 14"><path d="M19.300 7l-7.300-6.300v3.800h-11.300v5h11.300v3.800z" fill="#5b9bd8" stroke="#3f78b8" stroke-width="1"/><path d="M1.500 5.500h10.500v1.500h-10.500z" fill="#8cc0ee"/></svg>
<div style="left:652px;top:330px;width:1037px;height:668px;border:1px solid #346674;"></div>
<div style="left:659px;top:337px;width:1025px;height:1px;background:#346674;"></div>
<div style="left:659px;top:337px;width:1px;height:325px;background:#346674;"></div>
<div style="left:1683px;top:337px;width:1px;height:325px;background:#346674;"></div>
<div style="left:660px;top:338px;width:1023px;height:22px;background:#ebebeb;"></div>
<div style="left:660px;top:360px;width:1023px;height:1px;background:#346674;"></div>
<span class="t" style="font-size:12.5px;color:#333;font-weight:700;left:673.3px;top:343.8px;transform:scaleX(1.0557);">Samlet materialeforbrug</span>
<div style="left:660px;top:361px;width:1px;height:301px;background:#22586a;"></div>
<div style="left:1682px;top:361px;width:1px;height:301px;background:#22586a;"></div>
<div style="left:659px;top:660px;width:1025px;height:2px;background:#22586a;"></div>
<div style="left:661px;top:361px;width:1021px;height:30px;background:#f8f8f8;"></div>
<svg style="left:666px;top:368px" width="17" height="17" viewBox="0 0 17 17"><circle cx="8.500" cy="8.500" r="8.300" fill="#78ad48"/><path d="M14.400 2.600a8.300 8.300 0 0 1 0 11.800z" fill="#689a3e"/><path d="M6.800 3.500h3.400v3.300h3.300v3.400h-3.300v3.300h-3.400v-3.300h-3.300v-3.400h3.300z" fill="#ececec"/></svg><svg style="left:691px;top:366px" width="21" height="21" viewBox="0 0 21 21"><path d="M11.500 17h-9a1.500 1.500 0 0 1-1.500-1.500v-13a1.500 1.500 0 0 1 1.500-1.500h9a1.500 1.500 0 0 1 1.500 1.500v7" fill="none" stroke="#111" stroke-width="1.300"/><path d="M3.500 4.500h4M3.500 7.500h7M3.500 11h5" stroke="#111" stroke-width="1.100"/><circle cx="15" cy="15" r="4.600" fill="#f8f8f8" stroke="#111" stroke-width="1.300"/><path d="M15 12.300v5.400M12.300 15h5.400" stroke="#111" stroke-width="1.300"/></svg><svg style="left:721px;top:368px" width="15" height="16" viewBox="0 0 15 16"><path d="M4.500 2v-1.500h6v1.500" fill="none" stroke="#c8421c" stroke-width="1.400"/><rect x="0.500" y="2" width="14" height="2.200" fill="#cf4a22"/><path d="M1.800 4.800h11.400l-1 11.200h-9.400z" fill="#c8401a"/><path d="M5 6.500v8M7.500 6.500v8M10 6.500v8" stroke="#a93414" stroke-width="1"/></svg><svg style="left:747.5px;top:368px" width="15" height="18" viewBox="0 0 15 18"><path d="M8.800 3.500l1.800 1.200-7.300 11.300-2.300 1 0.500-2.300z" fill="none" stroke="#111" stroke-width="1.100"/><circle cx="10" cy="2.200" r="1.900" fill="#111"/><path d="M5 17h6.500" stroke="#111" stroke-width="1.100"/><path d="M13 17.200h1" stroke="#111" stroke-width="0.800"/></svg><svg style="left:772.5px;top:367px" width="18" height="18" viewBox="0 0 18 18"><path d="M16.500 1.200l-4.800 4.300-2-0.200 0.300-2.500a4.200 4.200 0 0 0-2.500 7.000l-6.300 5.700 0.800 2 2.300-0.300 5.500-6a4.200 4.200 0 0 0 7.200-5.600l-3.300 3.300" fill="none" stroke="#111" stroke-width="1.400" stroke-linejoin="round"/></svg><svg style="left:801.5px;top:366.5px" width="16" height="18" viewBox="0 0 16 18"><path d="M4.5 8V5.2a3.6 3.6 0 0 1 7.2 0V6" fill="none" stroke="#b4b4aa" stroke-width="2"/><path d="M1.5 9.5l13-1.5v8.5l-13 1z" fill="#6f6f86"/><path d="M8 8.8l6.500-.8v8.500l-6.500 .5z" fill="#4a4a62"/><path d="M7 11.500h2v3h-2z" fill="#2e2e40"/></svg><svg style="left:826px;top:366px" width="19" height="19" viewBox="0 0 19 19"><rect x="0.700" y="0.700" width="17.600" height="17.600" fill="#dadada" stroke="#9a9a9a" stroke-width="1.400"/><rect x="3" y="2.500" width="3.400" height="14" fill="#3c6ea4"/><rect x="7.800" y="2.500" width="3.400" height="14" fill="#3c6ea4"/><rect x="12.600" y="2.500" width="3.400" height="14" fill="#3c6ea4"/></svg><div style="left:854px;top:364px;width:1px;height:25px;background:#d0d0d0"></div><svg style="left:864.5px;top:369px" width="17" height="16" viewBox="0 0 17 16"><path d="M0 0.500h16.500l-6.700 7.500v6.500l-2.600 1.500v-8z" fill="#8f82a8"/><path d="M8.500 0.500h8l-6.700 7.500v6.500l-1.300 0.800z" fill="#7d7096"/></svg><svg style="left:890px;top:375px" width="10" height="6" viewBox="0 0 10 6"><path d="M0 0h10l-5 5.500z" fill="#444"/></svg><svg style="left:908px;top:367px" width="19" height="19" viewBox="0 0 19 19"><circle cx="7.500" cy="7.500" r="6.300" fill="#f4f8fc" stroke="#5c9ee0" stroke-width="1.800"/><path d="M12 12l5.500 5.500" stroke="#3a3a3a" stroke-width="2.600" stroke-linecap="round"/></svg><svg style="left:935.5px;top:368px" width="17" height="17" viewBox="0 0 17 17"><rect x="0.700" y="0.700" width="15.600" height="15.600" fill="#f0f0f4" stroke="#8a8a94" stroke-width="1.200" stroke-dasharray="2.500 1"/><rect x="2.500" y="2.500" width="8" height="8" fill="#6a9fe0"/><rect x="6.500" y="6.500" width="8" height="8" fill="#4a68c0"/><rect x="6.500" y="6.500" width="4" height="4" fill="#86b4ea"/></svg><svg style="left:962.5px;top:366px" width="17" height="20" viewBox="0 0 17 20"><path d="M15 5.500v-4.300h-13.500l7.200 8.600-7.500 8.700h14l0.800-4.500" fill="none" stroke="#000" stroke-width="1.200"/><path d="M1.500 1.200h3.800l6.400 8.300-1.500 1z" fill="#000"/></svg><div style="left:989px;top:364px;width:1px;height:25px;background:#d0d0d0"></div><svg style="left:999.5px;top:368px" width="17" height="16" viewBox="0 0 17 16"><rect x="7" y="2.500" width="9.500" height="11" fill="#e4e4e0" stroke="#b9c4b0" stroke-width="0.600"/><path d="M8 4.500h8M8 6.500h8M8 8.500h8M8 10.500h8M8 12.500h8" stroke="#8eb87a" stroke-width="0.900"/><path d="M0.300 2l9.500-2v16l-9.500-2z" fill="#5f9e3a"/><path d="M3 5l4 6M7 5l-4 6" stroke="#fff" stroke-width="1.300"/></svg><svg style="left:1025px;top:375px" width="10" height="6" viewBox="0 0 10 6"><path d="M0 0h10l-5 5.500z" fill="#444"/></svg><svg style="left:1041.5px;top:366px" width="21" height="20" viewBox="0 0 21 20"><path d="M6 7h-3a2 2 0 0 0-2 2v8a2 2 0 0 0 2 2h15a2 2 0 0 0 2-2v-8a2 2 0 0 0-2-2h-3" fill="none" stroke="#000" stroke-width="1.700"/><path d="M10.500 0.500v12M6 8.500l4.500 4.500 4.500-4.500" fill="none" stroke="#000" stroke-width="1.700"/></svg><div style="left:1070px;top:364px;width:1px;height:25px;background:#d0d0d0"></div><svg style="left:1081px;top:368px" width="17" height="16" viewBox="0 0 17 16"><rect x="0" y="0" width="7.5" height="16" fill="#4d4d68"/><rect x="1" y="2.5" width="5.5" height="1.2" fill="#b9b9c9"/><rect x="1" y="5" width="5.5" height="1.2" fill="#b9b9c9"/><rect x="1" y="7.5" width="5.5" height="1.2" fill="#b9b9c9"/><rect x="1" y="10" width="5.5" height="1.2" fill="#b9b9c9"/><rect x="9" y="0" width="7.5" height="16" fill="#4d4d68"/><rect x="10" y="2.5" width="5.5" height="1.2" fill="#b9b9c9"/><rect x="10" y="5" width="5.5" height="1.2" fill="#b9b9c9"/><rect x="10" y="7.5" width="5.5" height="1.2" fill="#b9b9c9"/><rect x="10" y="10" width="5.5" height="1.2" fill="#b9b9c9"/></svg><svg style="left:1107.5px;top:367.5px" width="17" height="17" viewBox="0 0 17 17"><circle cx="8.500" cy="8.500" r="8.200" fill="#5f8dc6"/><path d="M8.500 0.300a8.200 8.200 0 0 1 0 16.400z" fill="#6fa0dc"/><path d="M5 6.500a4.300 4.300 0 1 0 4-2.300" fill="none" stroke="#e8eef8" stroke-width="1.800"/><path d="M9.800 2v4.800l-3.200-2.200z" fill="#e8eef8"/></svg><svg style="left:1133px;top:366px" width="20" height="20" viewBox="0 0 20 20"><path d="M1.500 0h9.500l4 4v15a1 1 0 0 1-1 1h-12.500a1.500 1.500 0 0 1-1.500-1.500v-17a1.500 1.500 0 0 1 1.500-1.500z" fill="#bfe3f8"/><path d="M11 0l4 4h-4z" fill="#8fc8ee"/><g stroke="#3fd25a" stroke-width="1.600"><path d="M2.500 4.500h7M2.500 8h10M2.500 11.500h9M2.500 15h6"/></g><path d="M17.500 6.500l2.500 2.200-6.500 7.500-2.500-2.200z" fill="#ee2d4e"/><path d="M11 14l2.500 2.200-3.300 1.200z" fill="#f2c23e"/><path d="M18 6l1.300-1 1.200 1.500-1 1z" fill="#444"/></svg><svg style="left:1162.5px;top:368px" width="17" height="17" viewBox="0 0 17 17"><rect x="0.500" y="0.500" width="15.500" height="15.500" fill="#fff" stroke="#8a8a8a"/><path d="M3 8.500l3.500 4 7-9" fill="none" stroke="#222" stroke-width="1.900"/></svg><svg style="left:1315px;top:365.5px" width="21" height="21" viewBox="0 0 21 21"><rect x="0.500" y="0.500" width="20" height="20" rx="5" fill="#aecbd1" stroke="#336573"/><path d="M10.500 3.500v14M3.500 10.500h14" stroke="#5c9c80" stroke-width="1.700"/></svg><svg style="left:1343.5px;top:366.5px" width="19" height="20" viewBox="0 0 19 20"><g fill="#d9a566"><ellipse cx="7" cy="3" rx="6.500" ry="2.800"/><path d="M0.500 4.800a6.500 2.800 0 0 0 13 0v3a6.500 2.800 0 0 1-13 0z"/><path d="M0.500 9.300a6.500 2.800 0 0 0 13 0v3a6.500 2.800 0 0 1-13 0z"/></g><ellipse cx="7" cy="3" rx="6.500" ry="2.800" fill="#e3b67e"/><circle cx="13.500" cy="14.500" r="5" fill="#f8f8f8"/><path d="M10 13.500a3.600 3.600 0 0 1 6.500-1.200M17 15.500a3.600 3.600 0 0 1-6.500 1.200" fill="none" stroke="#4e9a6a" stroke-width="1.500"/><path d="M17.500 10.500v3h-3zM9.500 18.500v-3h3z" fill="#4e9a6a"/></svg><svg style="left:1371px;top:368.5px" width="16" height="16" viewBox="0 0 16 16"><circle cx="8" cy="8" r="7.700" fill="#e9bab3"/><rect x="3" y="6.500" width="10" height="3" rx="0.500" fill="#fbf3f1"/></svg><svg style="left:1477.5px;top:367px" width="17" height="18" viewBox="0 0 17 18"><path d="M4 0.500h8l1 5h-10z" fill="#ececec"/><path d="M9 0.500h3l-3 3z" fill="#d8d8d8"/><rect x="0.500" y="5.500" width="16" height="8.500" rx="1.500" fill="#6e6e86"/><rect x="0.500" y="5.500" width="16" height="3" rx="1.500" fill="#8c8ca0"/><rect x="3.500" y="11" width="10" height="6.500" fill="#f4f4f4" stroke="#a9a9b4" stroke-width="0.800"/><path d="M5 13.500h7M5 15.500h7" stroke="#c9c9c9" stroke-width="0.800"/></svg><svg style="left:1503.5px;top:367px" width="19" height="17" viewBox="0 0 19 17"><rect x="0.500" y="4.500" width="18" height="12" fill="#fff" stroke="#6c9ad8" stroke-width="1"/><rect x="0.500" y="4.500" width="18" height="4" fill="#f0a83a"/><path d="M0.500 8.500h18M0.500 12.500h18M6.500 4.500v12M12.500 4.500v12" stroke="#6c9ad8" stroke-width="0.900"/><path d="M9.500 0l3.500 3.500h-2.200v3h-2.600v-3h-2.200z" fill="#4a86d0"/></svg>
<div style="left:1187px;top:364px;width:125px;height:25px;background:#fff;border:1px solid #b5b5b5;box-sizing:border-box;"></div>
<span class="t" style="font-size:14.5px;color:#333;left:1191.6px;top:369.8px;transform:scaleX(0.9854);">Standard</span>
<svg style="left:1297px;top:375px" width="10" height="6" viewBox="0 0 10 6"><path d="M0 0h10l-5 5.5z" fill="#222"/></svg>
<div style="left:1399px;top:362px;width:70px;height:27px;background:#fff;border:1px solid #346674;box-sizing:border-box;"></div>
<span class="t" style="font-size:14.5px;color:#333;left:1406.3px;top:369.8px;transform:scaleX(0.9516);">100%</span>
<svg style="left:1453px;top:375px" width="10" height="6" viewBox="0 0 10 6"><path d="M0 0h10l-5 5.5z" fill="#222"/></svg>
<div style="left:661px;top:391px;width:1021px;height:26px;background:#f8f8f8;"></div>
<div style="left:681px;top:391px;width:980px;height:25px;background:#aecbd1;"></div>
<div style="left:661px;top:391px;width:1021px;height:1px;background:#346674;"></div>
<div style="left:661px;top:416px;width:1021px;height:1px;background:#346674;"></div>
<div style="left:680px;top:391px;width:1px;height:26px;background:#346674;"></div>
<div style="left:805px;top:391px;width:1px;height:26px;background:#346674;"></div>
<span class="t" style="font-size:13px;color:#000;font-weight:700;left:702.31px;top:398.05px;transform-origin:50% 0;transform:scaleX(1.0112);">Vare nummer</span>
<div style="left:994px;top:391px;width:1px;height:26px;background:#346674;"></div>
<span class="t" style="font-size:13px;color:#000;font-weight:700;left:886.26px;top:398.05px;transform-origin:50% 0;transform:scaleX(1.0479);">Vare</span>
<div style="left:1157px;top:391px;width:1px;height:26px;background:#346674;"></div>
<span class="t" style="font-size:13px;color:#000;font-weight:700;left:1049.63px;top:398.05px;transform-origin:50% 0;transform:scaleX(0.9538);">Kostpris</span>
<div style="left:1334px;top:391px;width:1px;height:26px;background:#346674;"></div>
<span class="t" style="font-size:13px;color:#000;font-weight:700;left:1229.75px;top:398.05px;transform-origin:50% 0;transform:scaleX(1.0092);">Antal</span>
<div style="left:1472px;top:391px;width:1px;height:26px;background:#346674;"></div>
<span class="t" style="font-size:13px;color:#000;font-weight:700;left:1348.6px;top:398.05px;transform-origin:50% 0;transform:scaleX(0.9909);">Kostpris Mængde</span>
<div style="left:1661px;top:391px;width:1px;height:26px;background:#346674;"></div>
<span class="t" style="font-size:13px;color:#000;font-weight:700;left:1535.22px;top:398.05px;transform-origin:50% 0;transform:scaleX(0.9801);">Kostbeløb</span>
<div style="left:661px;top:417px;width:20px;height:25px;background:#fff;"></div>
<div style="left:681px;top:417px;width:124px;height:25px;background:#fff;"></div>
<div style="left:805px;top:417px;width:189px;height:25px;background:#d4d4d4;"></div>
<div style="left:994px;top:417px;width:163px;height:25px;background:#fff;"></div>
<div style="left:1157px;top:417px;width:177px;height:25px;background:#fff;"></div>
<div style="left:1334px;top:417px;width:138px;height:25px;background:#d4d4d4;"></div>
<div style="left:1472px;top:417px;width:189px;height:25px;background:#fff;"></div>
<div style="left:805px;top:417px;width:1px;height:25px;background:#000;"></div>
<span class="t" style="font-size:12.5px;color:#3a3a3a;-webkit-text-stroke:0.5px;left:686.3px;top:423.8px;transform:scaleX(1.0724);">40-33</span>
<div style="left:994px;top:417px;width:1px;height:25px;background:#000;"></div>
<span class="t" style="font-size:12.5px;color:#3a3a3a;-webkit-text-stroke:0.5px;left:810.3px;top:423.8px;transform:scaleX(1.052);">C5 Light Stol</span>
<div style="left:1157px;top:417px;width:1px;height:25px;background:#000;"></div>
<span class="t" style="font-size:12.5px;color:#3a3a3a;-webkit-text-stroke:0.5px;right:767.2px;top:423.8px;transform-origin:100% 0;transform:scaleX(1.0174);">220,42</span>
<div style="left:1334px;top:417px;width:1px;height:25px;background:#000;"></div>
<span class="t" style="font-size:12.5px;color:#3a3a3a;-webkit-text-stroke:0.5px;right:590.2px;top:423.8px;transform-origin:100% 0;transform:scaleX(0.9825);">2.000,00000</span>
<div style="left:1472px;top:417px;width:1px;height:25px;background:#000;"></div>
<span class="t" style="font-size:12.5px;color:#3a3a3a;-webkit-text-stroke:0.5px;right:452.2px;top:423.8px;transform-origin:100% 0;transform:scaleX(0.9982);">1,00</span>
<span class="t" style="font-size:12.5px;color:#3a3a3a;-webkit-text-stroke:0.5px;right:262.2px;top:423.8px;transform-origin:100% 0;transform:scaleX(1.0358);">440.840,00</span>
<div style="left:681px;top:441px;width:980px;height:1px;background:#000;"></div>
<div style="left:661px;top:442px;width:20px;height:25px;background:#fff;"></div>
<div style="left:681px;top:442px;width:124px;height:25px;background:#e2eef4;"></div>
<div style="left:805px;top:442px;width:189px;height:25px;background:#d4d4d4;"></div>
<div style="left:994px;top:442px;width:163px;height:25px;background:#e2eef4;"></div>
<div style="left:1157px;top:442px;width:177px;height:25px;background:#e2eef4;"></div>
<div style="left:1334px;top:442px;width:138px;height:25px;background:#d4d4d4;"></div>
<div style="left:1472px;top:442px;width:189px;height:25px;background:#e2eef4;"></div>
<div style="left:805px;top:442px;width:1px;height:25px;background:#000;"></div>
<span class="t" style="font-size:12.5px;color:#3a3a3a;-webkit-text-stroke:0.5px;left:686.3px;top:448.8px;transform:scaleX(1.0724);">40-36</span>
<div style="left:994px;top:442px;width:1px;height:25px;background:#000;"></div>
<span class="t" style="font-size:12.5px;color:#3a3a3a;-webkit-text-stroke:0.5px;left:810.3px;top:448.8px;transform:scaleX(1.0314);">C5 Bord</span>
<div style="left:1157px;top:442px;width:1px;height:25px;background:#000;"></div>
<span class="t" style="font-size:12.5px;color:#3a3a3a;-webkit-text-stroke:0.5px;right:767.2px;top:448.8px;transform-origin:100% 0;transform:scaleX(1.0174);">625,42</span>
<div style="left:1334px;top:442px;width:1px;height:25px;background:#000;"></div>
<span class="t" style="font-size:12.5px;color:#3a3a3a;-webkit-text-stroke:0.5px;right:590.2px;top:448.8px;transform-origin:100% 0;transform:scaleX(0.995);">500,00000</span>
<div style="left:1472px;top:442px;width:1px;height:25px;background:#000;"></div>
<span class="t" style="font-size:12.5px;color:#3a3a3a;-webkit-text-stroke:0.5px;right:452.2px;top:448.8px;transform-origin:100% 0;transform:scaleX(0.9982);">1,00</span>
<span class="t" style="font-size:12.5px;color:#3a3a3a;-webkit-text-stroke:0.5px;right:262.2px;top:448.8px;transform-origin:100% 0;transform:scaleX(1.0358);">312.710,00</span>
<div style="left:681px;top:466px;width:980px;height:1px;background:#000;"></div>
<div style="left:661px;top:467px;width:1001px;height:139px;background:#d4d4d4;"></div>
<div style="left:1662px;top:417px;width:20px;height:189px;background:#e9e9e9;"></div>
<div style="left:1662px;top:418px;width:17px;height:17px;background:#d4dfe2;border:1px solid #b3c6cc;"></div>
<svg style="left:1666px;top:422px" width="12" height="10" viewBox="0 0 12 10"><path d="M1.5 7.5l4.5-5 4.5 5z" fill="#3c3c3c"/></svg>
<div style="left:1662px;top:585px;width:17px;height:17px;background:#d4dfe2;border:1px solid #b3c6cc;"></div>
<svg style="left:1666px;top:589px" width="12" height="10" viewBox="0 0 12 10"><path d="M1.5 2.5l4.5 5 4.5-5z" fill="#3c3c3c"/></svg>
<div style="left:661px;top:606px;width:1021px;height:33px;background:#fff;"></div>
<div style="left:998px;top:609px;width:154px;height:25px;background:#ebebeb;border:1px solid #d3d3d3;"></div>
<span class="t" style="font-size:12.5px;color:#3a3a3a;-webkit-text-stroke:0.5px;right:768.2px;top:617.8px;transform-origin:100% 0;transform:scaleX(1.0279);">845,84</span>
<div style="left:1161px;top:609px;width:168px;height:25px;background:#ebebeb;border:1px solid #d3d3d3;"></div>
<span class="t" style="font-size:12.5px;color:#3a3a3a;-webkit-text-stroke:0.5px;right:591.2px;top:617.8px;transform-origin:100% 0;transform:scaleX(1.0026);">2.500,00</span>
<div style="left:1475px;top:609px;width:181px;height:25px;background:#ebebeb;border:1px solid #d3d3d3;"></div>
<span class="t" style="font-size:12.5px;color:#3a3a3a;-webkit-text-stroke:0.5px;right:264.2px;top:617.8px;transform-origin:100% 0;transform:scaleX(1.0342);">753.550,00</span>
<div style="left:661px;top:639px;width:1021px;height:21px;background:#ebebeb;"></div>
<div style="left:662px;top:640px;width:17px;height:17px;background:#d4dfe2;border:1px solid #b3c6cc;"></div>
<svg style="left:666px;top:643px" width="10" height="12" viewBox="0 0 10 12"><path d="M7.5 1l-5 5 5 5z" fill="#3c3c3c"/></svg>
<div style="left:1469px;top:640px;width:17px;height:17px;background:#d4dfe2;border:1px solid #b3c6cc;"></div>
<svg style="left:1474.500px;top:643px" width="10" height="12" viewBox="0 0 10 12"><path d="M2.500 1l5 5-5 5z" fill="#222"/></svg>
<div style="left:1489px;top:639px;width:193px;height:21px;background:#aecbd1;"></div>
<div style="left:1489px;top:639px;width:193px;height:1px;background:#3a7080;"></div>
<div style="left:1549px;top:640px;width:73px;height:20px;background:#fff;"></div>
<span class="t" style="font-size:14.5px;color:#222;left:1553.3px;top:642.8px;transform:scaleX(0.9275);">Post 0 af 2</span>
<svg style="left:0;top:0" width="1918" height="1142"><path d="M1493 645h1.5v10h-1.5zM1500.0 645l-5.5 5 5.5 5zM1505.0 645l-5.5 5 5.5 5zM1518.5 645l-5.5 5 5.5 5zM1523.5 645l-5.5 5 5.5 5zM1541.5 645l-5.5 5 5.5 5zM1629.5 645l5.5 5-5.5 5zM1646.5 645l5.5 5-5.5 5zM1651.5 645l5.5 5-5.5 5zM1665.5 645l5.5 5-5.5 5zM1670.5 645l5.5 5-5.5 5zM1675.5 645h1.5v10h-1.5z" fill="#7f9ea7"/></svg>
<div style="left:659px;top:667px;width:1025px;height:1px;background:#346674;"></div>
<div style="left:659px;top:667px;width:1px;height:326px;background:#346674;"></div>
<div style="left:1683px;top:667px;width:1px;height:326px;background:#346674;"></div>
<div style="left:660px;top:668px;width:1023px;height:22px;background:#ebebeb;"></div>
<div style="left:660px;top:690px;width:1023px;height:1px;background:#346674;"></div>
<span class="t" style="font-size:12.5px;color:#333;font-weight:700;left:673.3px;top:673.8px;transform:scaleX(1.0603);">Samlet ruteforbrug</span>
<div style="left:660px;top:668px;width:1px;height:325px;background:#22586a;"></div>
<div style="left:1682px;top:691px;width:1px;height:302px;background:#22586a;"></div>
<div style="left:659px;top:991px;width:1025px;height:2px;background:#22586a;"></div>
<div style="left:661px;top:691px;width:1021px;height:30px;background:#f8f8f8;"></div>
<svg style="left:666px;top:698px" width="17" height="17" viewBox="0 0 17 17"><circle cx="8.500" cy="8.500" r="8.300" fill="#78ad48"/><path d="M14.400 2.600a8.300 8.300 0 0 1 0 11.800z" fill="#689a3e"/><path d="M6.800 3.500h3.400v3.300h3.300v3.400h-3.300v3.300h-3.400v-3.300h-3.300v-3.400h3.300z" fill="#ececec"/></svg><svg style="left:691px;top:696px" width="21" height="21" viewBox="0 0 21 21"><path d="M11.500 17h-9a1.500 1.500 0 0 1-1.500-1.500v-13a1.500 1.500 0 0 1 1.500-1.500h9a1.500 1.500 0 0 1 1.500 1.500v7" fill="none" stroke="#111" stroke-width="1.300"/><path d="M3.500 4.500h4M3.500 7.500h7M3.500 11h5" stroke="#111" stroke-width="1.100"/><circle cx="15" cy="15" r="4.600" fill="#f8f8f8" stroke="#111" stroke-width="1.300"/><path d="M15 12.300v5.400M12.300 15h5.400" stroke="#111" stroke-width="1.300"/></svg><svg style="left:721px;top:698px" width="15" height="16" viewBox="0 0 15 16"><path d="M4.500 2v-1.500h6v1.500" fill="none" stroke="#c8421c" stroke-width="1.400"/><rect x="0.500" y="2" width="14" height="2.200" fill="#cf4a22"/><path d="M1.800 4.800h11.400l-1 11.200h-9.400z" fill="#c8401a"/><path d="M5 6.500v8M7.500 6.500v8M10 6.500v8" stroke="#a93414" stroke-width="1"/></svg><svg style="left:747.5px;top:698px" width="15" height="18" viewBox="0 0 15 18"><path d="M8.800 3.500l1.800 1.200-7.300 11.300-2.300 1 0.500-2.300z" fill="none" stroke="#111" stroke-width="1.100"/><circle cx="10" cy="2.200" r="1.900" fill="#111"/><path d="M5 17h6.500" stroke="#111" stroke-width="1.100"/><path d="M13 17.200h1" stroke="#111" stroke-width="0.800"/></svg><svg style="left:772.5px;top:697px" width="18" height="18" viewBox="0 0 18 18"><path d="M16.500 1.200l-4.800 4.300-2-0.200 0.300-2.500a4.200 4.200 0 0 0-2.500 7.000l-6.300 5.700 0.800 2 2.300-0.300 5.500-6a4.200 4.200 0 0 0 7.200-5.600l-3.300 3.300" fill="none" stroke="#111" stroke-width="1.400" stroke-linejoin="round"/></svg><svg style="left:801.5px;top:696.5px" width="16" height="18" viewBox="0 0 16 18"><path d="M4.5 8V5.2a3.6 3.6 0 0 1 7.2 0V6" fill="none" stroke="#b4b4aa" stroke-width="2"/><path d="M1.5 9.5l13-1.5v8.5l-13 1z" fill="#6f6f86"/><path d="M8 8.8l6.500-.8v8.500l-6.500 .5z" fill="#4a4a62"/><path d="M7 11.500h2v3h-2z" fill="#2e2e40"/></svg><svg style="left:826px;top:696px" width="19" height="19" viewBox="0 0 19 19"><rect x="0.700" y="0.700" width="17.600" height="17.600" fill="#dadada" stroke="#9a9a9a" stroke-width="1.400"/><rect x="3" y="2.500" width="3.400" height="14" fill="#3c6ea4"/><rect x="7.800" y="2.500" width="3.400" height="14" fill="#3c6ea4"/><rect x="12.600" y="2.500" width="3.400" height="14" fill="#3c6ea4"/></svg><div style="left:854px;top:694px;width:1px;height:25px;background:#d0d0d0"></div><svg style="left:864.5px;top:699px" width="17" height="16" viewBox="0 0 17 16"><path d="M0 0.500h16.500l-6.700 7.500v6.500l-2.600 1.500v-8z" fill="#8f82a8"/><path d="M8.500 0.500h8l-6.700 7.500v6.500l-1.300 0.800z" fill="#7d7096"/></svg><svg style="left:890px;top:705px" width="10" height="6" viewBox="0 0 10 6"><path d="M0 0h10l-5 5.500z" fill="#444"/></svg><svg style="left:908px;top:697px" width="19" height="19" viewBox="0 0 19 19"><circle cx="7.500" cy="7.500" r="6.300" fill="#f4f8fc" stroke="#5c9ee0" stroke-width="1.800"/><path d="M12 12l5.500 5.500" stroke="#3a3a3a" stroke-width="2.600" stroke-linecap="round"/></svg><svg style="left:935.5px;top:698px" width="17" height="17" viewBox="0 0 17 17"><rect x="0.700" y="0.700" width="15.600" height="15.600" fill="#f0f0f4" stroke="#8a8a94" stroke-width="1.200" stroke-dasharray="2.500 1"/><rect x="2.500" y="2.500" width="8" height="8" fill="#6a9fe0"/><rect x="6.500" y="6.500" width="8" height="8" fill="#4a68c0"/><rect x="6.500" y="6.500" width="4" height="4" fill="#86b4ea"/></svg><svg style="left:962.5px;top:696px" width="17" height="20" viewBox="0 0 17 20"><path d="M15 5.500v-4.300h-13.500l7.200 8.600-7.500 8.700h14l0.800-4.500" fill="none" stroke="#000" stroke-width="1.200"/><path d="M1.500 1.200h3.800l6.400 8.300-1.500 1z" fill="#000"/></svg><div style="left:989px;top:694px;width:1px;height:25px;background:#d0d0d0"></div><svg style="left:999.5px;top:698px" width="17" height="16" viewBox="0 0 17 16"><rect x="7" y="2.500" width="9.500" height="11" fill="#e4e4e0" stroke="#b9c4b0" stroke-width="0.600"/><path d="M8 4.500h8M8 6.500h8M8 8.500h8M8 10.500h8M8 12.500h8" stroke="#8eb87a" stroke-width="0.900"/><path d="M0.300 2l9.500-2v16l-9.500-2z" fill="#5f9e3a"/><path d="M3 5l4 6M7 5l-4 6" stroke="#fff" stroke-width="1.300"/></svg><svg style="left:1025px;top:705px" width="10" height="6" viewBox="0 0 10 6"><path d="M0 0h10l-5 5.500z" fill="#444"/></svg><svg style="left:1041.5px;top:696px" width="21" height="20" viewBox="0 0 21 20"><path d="M6 7h-3a2 2 0 0 0-2 2v8a2 2 0 0 0 2 2h15a2 2 0 0 0 2-2v-8a2 2 0 0 0-2-2h-3" fill="none" stroke="#000" stroke-width="1.700"/><path d="M10.500 0.500v12M6 8.500l4.500 4.500 4.500-4.500" fill="none" stroke="#000" stroke-width="1.700"/></svg><div style="left:1070px;top:694px;width:1px;height:25px;background:#d0d0d0"></div><svg style="left:1081px;top:698px" width="17" height="16" viewBox="0 0 17 16"><rect x="0" y="0" width="7.5" height="16" fill="#4d4d68"/><rect x="1" y="2.5" width="5.5" height="1.2" fill="#b9b9c9"/><rect x="1" y="5" width="5.5" height="1.2" fill="#b9b9c9"/><rect x="1" y="7.5" width="5.5" height="1.2" fill="#b9b9c9"/><rect x="1" y="10" width="5.5" height="1.2" fill="#b9b9c9"/><rect x="9" y="0" width="7.5" height="16" fill="#4d4d68"/><rect x="10" y="2.5" width="5.5" height="1.2" fill="#b9b9c9"/><rect x="10" y="5" width="5.5" height="1.2" fill="#b9b9c9"/><rect x="10" y="7.5" width="5.5" height="1.2" fill="#b9b9c9"/><rect x="10" y="10" width="5.5" height="1.2" fill="#b9b9c9"/></svg><svg style="left:1107.5px;top:697.5px" width="17" height="17" viewBox="0 0 17 17"><circle cx="8.500" cy="8.500" r="8.200" fill="#5f8dc6"/><path d="M8.500 0.300a8.200 8.200 0 0 1 0 16.400z" fill="#6fa0dc"/><path d="M5 6.500a4.300 4.300 0 1 0 4-2.300" fill="none" stroke="#e8eef8" stroke-width="1.800"/><path d="M9.800 2v4.800l-3.200-2.200z" fill="#e8eef8"/></svg><svg style="left:1133px;top:696px" width="20" height="20" viewBox="0 0 20 20"><path d="M1.500 0h9.500l4 4v15a1 1 0 0 1-1 1h-12.500a1.500 1.500 0 0 1-1.500-1.500v-17a1.500 1.500 0 0 1 1.500-1.500z" fill="#bfe3f8"/><path d="M11 0l4 4h-4z" fill="#8fc8ee"/><g stroke="#3fd25a" stroke-width="1.600"><path d="M2.500 4.500h7M2.500 8h10M2.500 11.500h9M2.500 15h6"/></g><path d="M17.500 6.500l2.500 2.200-6.500 7.500-2.500-2.200z" fill="#ee2d4e"/><path d="M11 14l2.500 2.200-3.300 1.200z" fill="#f2c23e"/><path d="M18 6l1.300-1 1.200 1.500-1 1z" fill="#444"/></svg><svg style="left:1162.5px;top:698px" width="17" height="17" viewBox="0 0 17 17"><rect x="0.500" y="0.500" width="15.500" height="15.500" fill="#fff" stroke="#8a8a8a"/><path d="M3 8.500l3.500 4 7-9" fill="none" stroke="#222" stroke-width="1.900"/></svg><svg style="left:1315px;top:695.5px" width="21" height="21" viewBox="0 0 21 21"><rect x="0.500" y="0.500" width="20" height="20" rx="5" fill="#aecbd1" stroke="#336573"/><path d="M10.500 3.500v14M3.500 10.500h14" stroke="#5c9c80" stroke-width="1.700"/></svg><svg style="left:1343.5px;top:696.5px" width="19" height="20" viewBox="0 0 19 20"><g fill="#d9a566"><ellipse cx="7" cy="3" rx="6.500" ry="2.800"/><path d="M0.500 4.800a6.500 2.800 0 0 0 13 0v3a6.500 2.800 0 0 1-13 0z"/><path d="M0.500 9.300a6.500 2.800 0 0 0 13 0v3a6.500 2.800 0 0 1-13 0z"/></g><ellipse cx="7" cy="3" rx="6.500" ry="2.800" fill="#e3b67e"/><circle cx="13.500" cy="14.500" r="5" fill="#f8f8f8"/><path d="M10 13.500a3.600 3.600 0 0 1 6.500-1.200M17 15.500a3.600 3.600 0 0 1-6.500 1.200" fill="none" stroke="#4e9a6a" stroke-width="1.500"/><path d="M17.500 10.500v3h-3zM9.500 18.500v-3h3z" fill="#4e9a6a"/></svg><svg style="left:1371px;top:698.5px" width="16" height="16" viewBox="0 0 16 16"><circle cx="8" cy="8" r="7.700" fill="#e9bab3"/><rect x="3" y="6.500" width="10" height="3" rx="0.500" fill="#fbf3f1"/></svg><svg style="left:1477.5px;top:697px" width="17" height="18" viewBox="0 0 17 18"><path d="M4 0.500h8l1 5h-10z" fill="#ececec"/><path d="M9 0.500h3l-3 3z" fill="#d8d8d8"/><rect x="0.500" y="5.500" width="16" height="8.500" rx="1.500" fill="#6e6e86"/><rect x="0.500" y="5.500" width="16" height="3" rx="1.500" fill="#8c8ca0"/><rect x="3.500" y="11" width="10" height="6.500" fill="#f4f4f4" stroke="#a9a9b4" stroke-width="0.800"/><path d="M5 13.500h7M5 15.500h7" stroke="#c9c9c9" stroke-width="0.800"/></svg><svg style="left:1503.5px;top:697px" width="19" height="17" viewBox="0 0 19 17"><rect x="0.500" y="4.500" width="18" height="12" fill="#fff" stroke="#6c9ad8" stroke-width="1"/><rect x="0.500" y="4.500" width="18" height="4" fill="#f0a83a"/><path d="M0.500 8.500h18M0.500 12.500h18M6.500 4.500v12M12.500 4.500v12" stroke="#6c9ad8" stroke-width="0.900"/><path d="M9.500 0l3.500 3.500h-2.200v3h-2.600v-3h-2.200z" fill="#4a86d0"/></svg>
<div style="left:1187px;top:694px;width:125px;height:25px;background:#fff;border:1px solid #b5b5b5;box-sizing:border-box;"></div>
<span class="t" style="font-size:14.5px;color:#333;left:1191.6px;top:699.8px;transform:scaleX(0.9854);">Standard</span>
<svg style="left:1297px;top:705px" width="10" height="6" viewBox="0 0 10 6"><path d="M0 0h10l-5 5.5z" fill="#222"/></svg>
<div style="left:1399px;top:692px;width:70px;height:27px;background:#fff;border:1px solid #346674;box-sizing:border-box;"></div>
<span class="t" style="font-size:14.5px;color:#333;left:1406.3px;top:699.8px;transform:scaleX(0.9516);">100%</span>
<svg style="left:1453px;top:705px" width="10" height="6" viewBox="0 0 10 6"><path d="M0 0h10l-5 5.5z" fill="#222"/></svg>
<div style="left:661px;top:721px;width:1021px;height:26px;background:#f8f8f8;"></div>
<div style="left:681px;top:721px;width:980px;height:25px;background:#aecbd1;"></div>
<div style="left:661px;top:721px;width:1021px;height:1px;background:#346674;"></div>
<div style="left:661px;top:746px;width:1021px;height:1px;background:#346674;"></div>
<div style="left:680px;top:721px;width:1px;height:26px;background:#346674;"></div>
<div style="left:950px;top:721px;width:1px;height:26px;background:#346674;"></div>
<span class="t" style="font-size:13px;color:#000;font-weight:700;left:794.08px;top:728.05px;transform-origin:50% 0;transform:scaleX(0.9772);">Trin</span>
<div style="left:1362px;top:721px;width:1px;height:26px;background:#346674;"></div>
<span class="t" style="font-size:13px;color:#000;font-weight:700;left:1124.72px;top:728.05px;transform-origin:50% 0;transform:scaleX(0.9801);">Kostbeløb</span>
<div style="left:1661px;top:721px;width:1px;height:26px;background:#346674;"></div>
<span class="t" style="font-size:13px;color:#000;font-weight:700;left:1477.32px;top:728.05px;transform-origin:50% 0;transform:scaleX(1.0136);">Forkalk. tid</span>
<svg style="left:931px;top:730px" width="10" height="6" viewBox="0 0 10 6"><path d="M0 0h10l-5 5.5z" fill="#333"/></svg>
<div style="left:661px;top:747px;width:20px;height:25px;background:#fff;"></div>
<div style="left:681px;top:747px;width:269px;height:25px;background:#d4d4d4;"></div>
<div style="left:950px;top:747px;width:412px;height:25px;background:#fff;"></div>
<div style="left:1362px;top:747px;width:299px;height:25px;background:#fff;"></div>
<div style="left:950px;top:747px;width:1px;height:25px;background:#000;"></div>
<span class="t" style="font-size:12.5px;color:#3a3a3a;-webkit-text-stroke:0.5px;left:686.3px;top:753.8px;transform:scaleX(1.0413);">Trin 3</span>
<div style="left:1362px;top:747px;width:1px;height:25px;background:#000;"></div>
<span class="t" style="font-size:12.5px;color:#3a3a3a;-webkit-text-stroke:0.5px;right:562.2px;top:753.8px;transform-origin:100% 0;transform:scaleX(1.0358);">125.000,00</span>
<span class="t" style="font-size:12.5px;color:#3a3a3a;-webkit-text-stroke:0.5px;right:262.2px;top:753.8px;transform-origin:100% 0;transform:scaleX(1.0279);">500,00</span>
<div style="left:681px;top:771px;width:980px;height:1px;background:#000;"></div>
<div style="left:661px;top:772px;width:20px;height:25px;background:#fff;"></div>
<div style="left:681px;top:772px;width:269px;height:25px;background:#d4d4d4;"></div>
<div style="left:950px;top:772px;width:412px;height:25px;background:#e2eef4;"></div>
<div style="left:1362px;top:772px;width:299px;height:25px;background:#e2eef4;"></div>
<div style="left:950px;top:772px;width:1px;height:25px;background:#000;"></div>
<span class="t" style="font-size:12.5px;color:#3a3a3a;-webkit-text-stroke:0.5px;left:686.3px;top:778.8px;transform:scaleX(1.0413);">Trin 2</span>
<div style="left:1362px;top:772px;width:1px;height:25px;background:#000;"></div>
<span class="t" style="font-size:12.5px;color:#3a3a3a;-webkit-text-stroke:0.5px;right:562.2px;top:778.8px;transform-origin:100% 0;transform:scaleX(1.0394);">31.250,00</span>
<span class="t" style="font-size:12.5px;color:#3a3a3a;-webkit-text-stroke:0.5px;right:262.2px;top:778.8px;transform-origin:100% 0;transform:scaleX(1.0279);">125,00</span>
<div style="left:681px;top:796px;width:980px;height:1px;background:#000;"></div>
<div style="left:661px;top:797px;width:20px;height:25px;background:#fff;"></div>
<div style="left:681px;top:797px;width:269px;height:25px;background:#d4d4d4;"></div>
<div style="left:950px;top:797px;width:412px;height:25px;background:#fff;"></div>
<div style="left:1362px;top:797px;width:299px;height:25px;background:#fff;"></div>
<div style="left:950px;top:797px;width:1px;height:25px;background:#000;"></div>
<span class="t" style="font-size:12.5px;color:#3a3a3a;-webkit-text-stroke:0.5px;left:686.3px;top:803.8px;transform:scaleX(0.9937);">Trin 1</span>
<div style="left:1362px;top:797px;width:1px;height:25px;background:#000;"></div>
<span class="t" style="font-size:12.5px;color:#3a3a3a;-webkit-text-stroke:0.5px;right:562.2px;top:803.8px;transform-origin:100% 0;transform:scaleX(1.0394);">31.250,00</span>
<span class="t" style="font-size:12.5px;color:#3a3a3a;-webkit-text-stroke:0.5px;right:262.2px;top:803.8px;transform-origin:100% 0;transform:scaleX(1.0279);">125,00</span>
<div style="left:681px;top:821px;width:980px;height:1px;background:#000;"></div>
<div style="left:661px;top:822px;width:1001px;height:115px;background:#d4d4d4;"></div>
<div style="left:1662px;top:747px;width:20px;height:190px;background:#e9e9e9;"></div>
<div style="left:1662px;top:748px;width:17px;height:17px;background:#d4dfe2;border:1px solid #b3c6cc;"></div>
<svg style="left:1666px;top:752px" width="12" height="10" viewBox="0 0 12 10"><path d="M1.5 7.5l4.5-5 4.5 5z" fill="#3c3c3c"/></svg>
<div style="left:1662px;top:916px;width:17px;height:17px;background:#d4dfe2;border:1px solid #b3c6cc;"></div>
<svg style="left:1666px;top:920px" width="12" height="10" viewBox="0 0 12 10"><path d="M1.5 2.5l4.5 5 4.5-5z" fill="#3c3c3c"/></svg>
<div style="left:661px;top:937px;width:1021px;height:33px;background:#fff;"></div>
<div style="left:954px;top:940px;width:403px;height:25px;background:#ebebeb;border:1px solid #d3d3d3;"></div>
<span class="t" style="font-size:12.5px;color:#3a3a3a;-webkit-text-stroke:0.5px;right:563.2px;top:948.8px;transform-origin:100% 0;transform:scaleX(1.0278);">187.500,00</span>
<div style="left:1365px;top:940px;width:291px;height:25px;background:#ebebeb;border:1px solid #d3d3d3;"></div>
<span class="t" style="font-size:12.5px;color:#3a3a3a;-webkit-text-stroke:0.5px;right:264.2px;top:948.8px;transform-origin:100% 0;transform:scaleX(1.0279);">750,00</span>
<div style="left:661px;top:970px;width:1021px;height:21px;background:#ebebeb;"></div>
<div style="left:662px;top:971px;width:17px;height:17px;background:#d4dfe2;border:1px solid #b3c6cc;"></div>
<svg style="left:666px;top:974px" width="10" height="12" viewBox="0 0 10 12"><path d="M7.5 1l-5 5 5 5z" fill="#3c3c3c"/></svg>
<div style="left:1469px;top:971px;width:17px;height:17px;background:#d4dfe2;border:1px solid #b3c6cc;"></div>
<svg style="left:1474.500px;top:974px" width="10" height="12" viewBox="0 0 10 12"><path d="M2.500 1l5 5-5 5z" fill="#222"/></svg>
<div style="left:1489px;top:970px;width:193px;height:21px;background:#aecbd1;"></div>
<div style="left:1489px;top:970px;width:193px;height:1px;background:#3a7080;"></div>
<div style="left:1549px;top:971px;width:73px;height:20px;background:#fff;"></div>
<span class="t" style="font-size:14.5px;color:#222;left:1553.3px;top:973.8px;transform:scaleX(0.9275);">Post 0 af 3</span>
<svg style="left:0;top:0" width="1918" height="1142"><path d="M1493 976h1.5v10h-1.5zM1500.0 976l-5.5 5 5.5 5zM1505.0 976l-5.5 5 5.5 5zM1518.5 976l-5.5 5 5.5 5zM1523.5 976l-5.5 5 5.5 5zM1541.5 976l-5.5 5 5.5 5zM1629.5 976l5.5 5-5.5 5zM1646.5 976l5.5 5-5.5 5zM1651.5 976l5.5 5-5.5 5zM1665.5 976l5.5 5-5.5 5zM1670.5 976l5.5 5-5.5 5zM1675.5 976h1.5v10h-1.5z" fill="#7f9ea7"/></svg>
<div style="left:1704px;top:330px;width:123px;height:23px;background:#aecbd1;border:1px solid #346674;border-radius:7px;"></div>
<svg style="left:1712.0px;top:336.0px" width="13" height="14" viewBox="0 0 13 14"><path d="M5 0.500h7.500v7h-7.500z" fill="#c98a3e"/><path d="M5 0.500h7.500v2h-7.500z" fill="#e2ad6a"/><path d="M0.500 5h7.500v8.500h-7.500z" fill="#d99a4c"/><path d="M0.500 5h7.500v2.500h-7.500z" fill="#ecc080"/><path d="M8 5l1.500-1v8l-1.500 1.500z" fill="#a86e2a"/></svg>
<span class="t" style="font-size:13.3px;color:#3c3c3c;left:1731.3px;top:336.9px;transform:scaleX(0.9821);"><u>F</u>orkalkulation</span>
<div style="left:1704px;top:361px;width:123px;height:23px;background:#aecbd1;border:1px solid #346674;border-radius:7px;"></div>
<svg style="left:1712.0px;top:367.0px" width="13" height="14" viewBox="0 0 13 14"><path d="M5 0.500h7.500v7h-7.500z" fill="#c98a3e"/><path d="M5 0.500h7.500v2h-7.500z" fill="#e2ad6a"/><path d="M0.500 5h7.500v8.500h-7.500z" fill="#d99a4c"/><path d="M0.500 5h7.500v2.500h-7.500z" fill="#ecc080"/><path d="M8 5l1.500-1v8l-1.500 1.500z" fill="#a86e2a"/></svg>
<span class="t" style="font-size:13.3px;color:#3c3c3c;left:1731.3px;top:367.9px;transform:scaleX(0.949);clip-path:inset(-2px 0.1px -4px 0);">Reserver produkt</span>
<div style="left:1704px;top:392px;width:123px;height:23px;background:#aecbd1;border:1px solid #346674;border-radius:7px;"></div>
<svg style="left:1712.0px;top:398.0px" width="13" height="14" viewBox="0 0 13 14"><path d="M5 0.500h7.500v7h-7.500z" fill="#c98a3e"/><path d="M5 0.500h7.500v2h-7.500z" fill="#e2ad6a"/><path d="M0.500 5h7.500v8.500h-7.500z" fill="#d99a4c"/><path d="M0.500 5h7.500v2.500h-7.500z" fill="#ecc080"/><path d="M8 5l1.500-1v8l-1.500 1.500z" fill="#a86e2a"/></svg>
<span class="t" style="font-size:13.3px;color:#3c3c3c;left:1731.3px;top:398.9px;transform:scaleX(0.9386);"><u>P</u>lanlæg</span>
<div style="left:1704px;top:423px;width:123px;height:23px;background:#aecbd1;border:1px solid #346674;border-radius:7px;"></div>
<svg style="left:1712.0px;top:429.0px" width="13" height="14" viewBox="0 0 13 14"><path d="M5 0.500h7.500v7h-7.500z" fill="#c98a3e"/><path d="M5 0.500h7.500v2h-7.500z" fill="#e2ad6a"/><path d="M0.500 5h7.500v8.500h-7.500z" fill="#d99a4c"/><path d="M0.500 5h7.500v2.500h-7.500z" fill="#ecc080"/><path d="M8 5l1.500-1v8l-1.500 1.500z" fill="#a86e2a"/></svg>
<span class="t" style="font-size:13.3px;color:#3c3c3c;left:1731.3px;top:429.9px;transform:scaleX(0.9639);"><u>S</u>let planl.</span>
<div style="left:1704px;top:454px;width:123px;height:23px;background:#aecbd1;border:1px solid #346674;border-radius:7px;"></div>
<svg style="left:1712.0px;top:460.0px" width="13" height="14" viewBox="0 0 13 14"><path d="M5 0.500h7.500v7h-7.500z" fill="#c98a3e"/><path d="M5 0.500h7.500v2h-7.500z" fill="#e2ad6a"/><path d="M0.500 5h7.500v8.500h-7.500z" fill="#d99a4c"/><path d="M0.500 5h7.500v2.500h-7.500z" fill="#ecc080"/><path d="M8 5l1.500-1v8l-1.500 1.500z" fill="#a86e2a"/></svg>
<span class="t" style="font-size:13.3px;color:#3c3c3c;left:1731.3px;top:460.9px;transform:scaleX(0.9684);"><u>I</u>gangsæt</span>
<div style="left:1704px;top:485px;width:123px;height:23px;background:#aecbd1;border:1px solid #346674;border-radius:7px;"></div>
<svg style="left:1712.0px;top:489.0px" width="13" height="16" viewBox="0 0 13 16"><rect x="0.800" y="2.500" width="11.400" height="12.700" rx="1.500" fill="none" stroke="#336573" stroke-width="1.100"/><path d="M4 2.500l2.500-2 2.500 2z" fill="#336573"/><path d="M3 6h1.200M5.500 6h4.500M3 9h1.200M3 12h1.200M6 12h4" stroke="#336573" stroke-width="1"/></svg>
<span class="t" style="font-size:13.3px;color:#3c3c3c;left:1731.3px;top:491.9px;transform:scaleX(0.9709);clip-path:inset(-2px 1.65px -4px 0);">Færdigmeld Batc</span>
<div style="left:1704px;top:516px;width:123px;height:23px;background:#aecbd1;border:1px solid #346674;border-radius:7px;"></div>
<svg style="left:1712.0px;top:522.0px" width="13" height="14" viewBox="0 0 13 14"><path d="M5 0.500h7.500v7h-7.500z" fill="#c98a3e"/><path d="M5 0.500h7.500v2h-7.500z" fill="#e2ad6a"/><path d="M0.500 5h7.500v8.500h-7.500z" fill="#d99a4c"/><path d="M0.500 5h7.500v2.500h-7.500z" fill="#ecc080"/><path d="M8 5l1.500-1v8l-1.500 1.500z" fill="#a86e2a"/></svg>
<span class="t" style="font-size:13.3px;color:#3c3c3c;left:1731.3px;top:522.9px;transform:scaleX(0.9857);"><u>A</u>rkiver</span>
<span class="t" style="font-size:17.5px;color:#3a3a3a;left:1861.31px;top:299.4px;transform:rotate(90deg) scaleX(0.9985);">Yderlige funktioner</span>
<div style="left:38px;top:1025px;width:123px;height:23px;background:#aecbd1;border:1px solid #346674;border-radius:7px;"></div>
<svg style="left:46.0px;top:1029.0px" width="13" height="16" viewBox="0 0 13 16"><rect x="0.800" y="2.500" width="11.400" height="12.700" rx="1.500" fill="none" stroke="#336573" stroke-width="1.100"/><path d="M4 2.500l2.500-2 2.500 2z" fill="#336573"/><path d="M3 6h1.200M5.500 6h4.500M3 9h1.200M3 12h1.200M6 12h4" stroke="#336573" stroke-width="1"/></svg>
<span class="t" style="font-size:13.3px;color:#3c3c3c;left:65.3px;top:1031.9px;transform:scaleX(0.9553);"><u>S</u>tykliste</span>
<div style="left:169px;top:1025px;width:123px;height:23px;background:#aecbd1;border:1px solid #346674;border-radius:7px;"></div>
<svg style="left:177.0px;top:1029.0px" width="13" height="16" viewBox="0 0 13 16"><rect x="0.800" y="2.500" width="11.400" height="12.700" rx="1.500" fill="none" stroke="#336573" stroke-width="1.100"/><path d="M4 2.500l2.500-2 2.500 2z" fill="#336573"/><path d="M3 6h1.200M5.500 6h4.500M3 9h1.200M3 12h1.200M6 12h4" stroke="#336573" stroke-width="1"/></svg>
<span class="t" style="font-size:13.3px;color:#3c3c3c;left:196.3px;top:1031.9px;transform:scaleX(0.9356);"><u>R</u>ute</span>
<div style="left:300px;top:1025px;width:123px;height:23px;background:#aecbd1;border:1px solid #346674;border-radius:7px;"></div>
<svg style="left:307.0px;top:1030.5px" width="15" height="13" viewBox="0 0 15 13"><rect x="3.500" y="0" width="8" height="4" fill="#f2f2f2"/><rect x="0.500" y="3.500" width="14" height="6" rx="1" fill="#77778c"/><rect x="0.500" y="3.500" width="14" height="2" fill="#9a9aae"/><rect x="3.500" y="7.500" width="8" height="5" fill="#fafafa" stroke="#b9b9c4" stroke-width="0.600"/></svg>
<span class="t" style="font-size:13.3px;color:#3c3c3c;left:327.3px;top:1031.9px;transform:scaleX(0.9605);"><u>U</u>dskriv POrdre</span>
<div style="left:431px;top:1025px;width:123px;height:23px;background:#aecbd1;border:1px solid #346674;border-radius:7px;"></div>
<svg style="left:439.0px;top:1029.0px" width="13" height="16" viewBox="0 0 13 16"><rect x="0.800" y="2.500" width="11.400" height="12.700" rx="1.500" fill="none" stroke="#336573" stroke-width="1.100"/><path d="M4 2.500l2.500-2 2.500 2z" fill="#336573"/><path d="M3 6h1.200M5.500 6h4.500M3 9h1.200M3 12h1.200M6 12h4" stroke="#336573" stroke-width="1"/></svg>
<span class="t" style="font-size:13.3px;color:#3c3c3c;left:458.3px;top:1031.9px;transform:scaleX(0.9246);">Reseverede</span>
<div style="left:562px;top:1025px;width:123px;height:23px;background:#aecbd1;border:1px solid #346674;border-radius:7px;"></div>
<svg style="left:572.0px;top:1029.0px" width="9" height="11" viewBox="0 0 9 11"><path d="M0 0h6l3 3v8h-9z" fill="#bfe0f2"/><path d="M1.500 4h6M1.500 6h6M1.500 8h6" stroke="#9ec6de" stroke-width="0.800"/></svg>
<span class="t" style="font-size:13.3px;color:#3c3c3c;left:589.3px;top:1031.9px;transform:scaleX(0.9622);">Vis plan</span>
<div style="left:693px;top:1025px;width:123px;height:23px;background:#d7e5e8;border:1px solid #a9c0c6;border-radius:7px;"></div>
<svg style="left:701.0px;top:1029.0px" width="13" height="16" viewBox="0 0 13 16"><rect x="0.800" y="2.500" width="11.400" height="12.700" rx="1.500" fill="none" stroke="#336573" stroke-width="1.100"/><path d="M4 2.500l2.500-2 2.500 2z" fill="#336573"/><path d="M3 6h1.200M5.500 6h4.500M3 9h1.200M3 12h1.200M6 12h4" stroke="#336573" stroke-width="1"/></svg>
<span class="t" style="font-size:13.3px;color:#a8b4b8;left:720.3px;top:1031.9px;transform:scaleX(0.9841);clip-path:inset(-2px 6.71px -4px 0);">Emballageforbrug</span>
<div style="left:38px;top:1056px;width:123px;height:23px;background:#aecbd1;border:1px solid #346674;border-radius:7px;"></div>
<svg style="left:46.0px;top:1060.0px" width="13" height="16" viewBox="0 0 13 16"><rect x="0.800" y="2.500" width="11.400" height="12.700" rx="1.500" fill="none" stroke="#336573" stroke-width="1.100"/><path d="M4 2.500l2.500-2 2.500 2z" fill="#336573"/><path d="M3 6h1.200M5.500 6h4.500M3 9h1.200M3 12h1.200M6 12h4" stroke="#336573" stroke-width="1"/></svg>
<span class="t" style="font-size:13.3px;color:#3c3c3c;left:65.3px;top:1062.9px;transform:scaleX(1.0152);clip-path:inset(-2px 1.58px -4px 0);">Materialeforbrug</span>
<div style="left:169px;top:1056px;width:123px;height:23px;background:#aecbd1;border:1px solid #346674;border-radius:7px;"></div>
<svg style="left:177.0px;top:1060.0px" width="13" height="16" viewBox="0 0 13 16"><rect x="0.800" y="2.500" width="11.400" height="12.700" rx="1.500" fill="none" stroke="#336573" stroke-width="1.100"/><path d="M4 2.500l2.500-2 2.500 2z" fill="#336573"/><path d="M3 6h1.200M5.500 6h4.500M3 9h1.200M3 12h1.200M6 12h4" stroke="#336573" stroke-width="1"/></svg>
<span class="t" style="font-size:13.3px;color:#3c3c3c;left:196.3px;top:1062.9px;transform:scaleX(0.994);">Ruteforbrug</span>
<div style="left:562px;top:1056px;width:123px;height:23px;background:#aecbd1;border:1px solid #346674;border-radius:7px;"></div>
<svg style="left:570.0px;top:1060.0px" width="13" height="16" viewBox="0 0 13 16"><rect x="0.800" y="2.500" width="11.400" height="12.700" rx="1.500" fill="none" stroke="#336573" stroke-width="1.100"/><path d="M4 2.500l2.500-2 2.500 2z" fill="#336573"/><path d="M3 6h1.200M5.500 6h4.500M3 9h1.200M3 12h1.200M6 12h4" stroke="#336573" stroke-width="1"/></svg>
<span class="t" style="font-size:13.3px;color:#3c3c3c;left:589.3px;top:1062.9px;transform:scaleX(0.9923);">Vis plan - linjer</span>
</body></html>
